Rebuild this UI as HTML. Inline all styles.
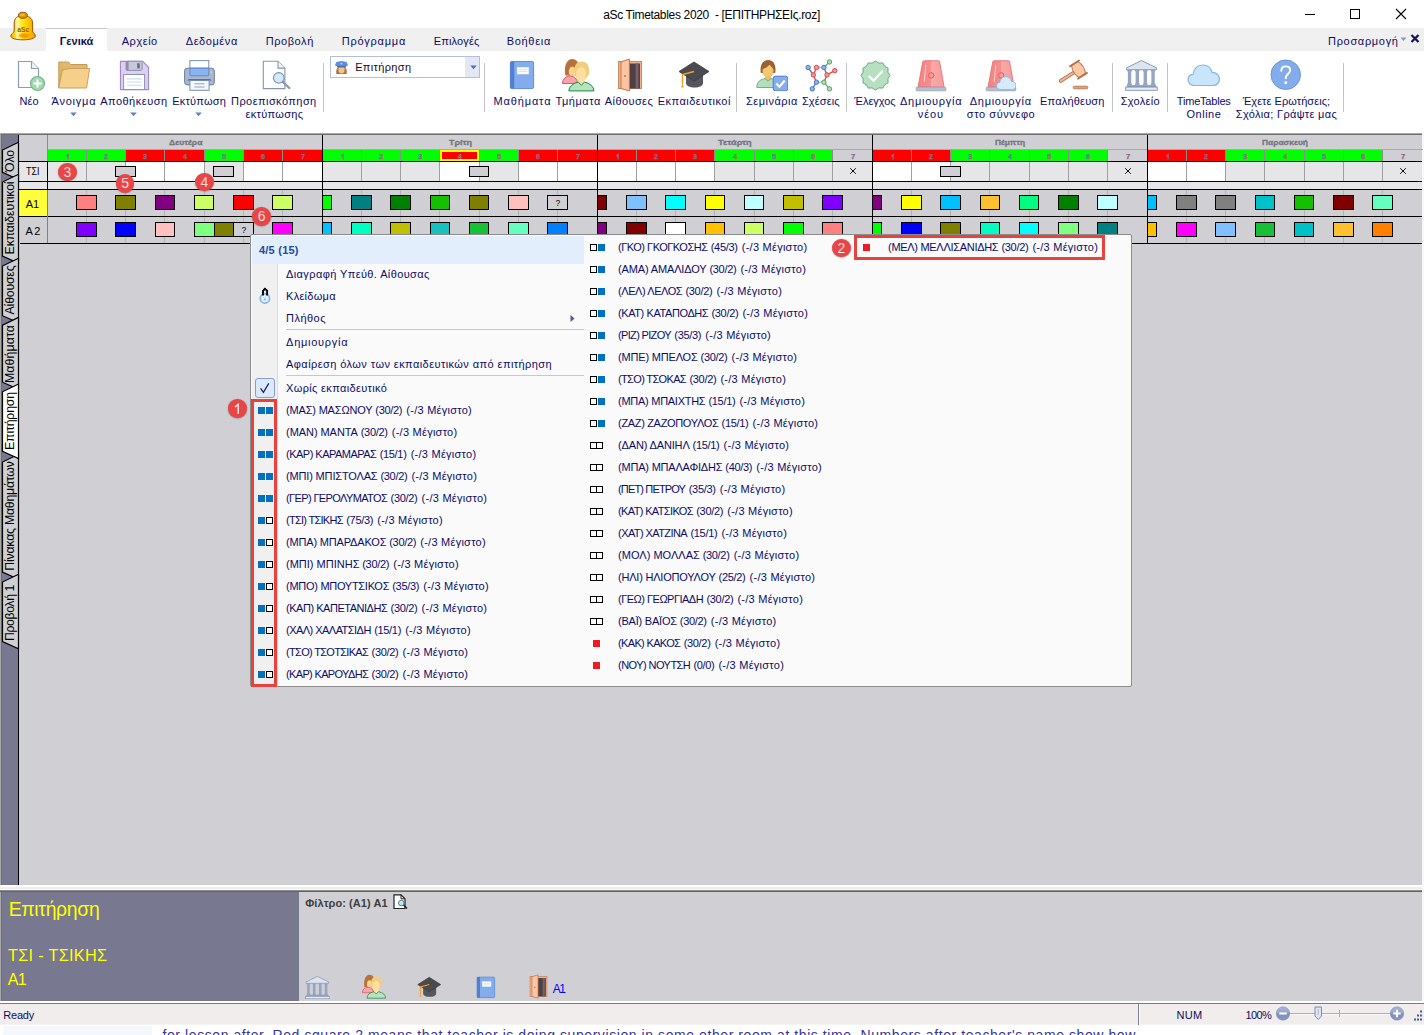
<!DOCTYPE html>
<html><head><meta charset="utf-8"><title>aSc Timetables</title><style>
html,body{margin:0;padding:0;overflow:hidden;}
body{width:1424px;height:1035px;position:relative;overflow:hidden;background:#fff;font-family:"Liberation Sans",sans-serif;}
body div,body span,body svg{position:absolute;}
span{white-space:pre;}
</style></head><body>
<div style="left:0;top:0;width:1424px;height:1035px;overflow:hidden;background:#fff;">
<svg width="0" height="0" style="left:0;top:0">
<defs>
<linearGradient id="gBell2" x1="0" x2="1"><stop offset="0" stop-color="#ffb400"/><stop offset="0.14" stop-color="#ffd000"/><stop offset="0.27" stop-color="#fff6c0"/><stop offset="0.42" stop-color="#ffee20"/><stop offset="0.7" stop-color="#ffcc00"/><stop offset="1" stop-color="#f09800"/></linearGradient><radialGradient id="gBell3" cx="0.5" cy="0.5" r="0.5"><stop offset="0" stop-color="#ff8400"/><stop offset="0.6" stop-color="#ff9600" stop-opacity="0.8"/><stop offset="1" stop-color="#ffb000" stop-opacity="0"/></radialGradient><radialGradient id="gBell" cx="0.38" cy="0.35" r="0.75"><stop offset="0" stop-color="#fff27a"/><stop offset="0.45" stop-color="#ffc81e"/><stop offset="1" stop-color="#f08a00"/></radialGradient>
<linearGradient id="gSir" x1="0" x2="1"><stop offset="0" stop-color="#f48282"/><stop offset="0.5" stop-color="#f68e8e"/><stop offset="0.5" stop-color="#f8a9a9"/><stop offset="1" stop-color="#f69c9c"/></linearGradient>

<symbol id="i-bell" viewBox="0 0 28 30">
<path d="M1.800 25C1.800 23 4.600 22.300 5.200 20L5.200 12C5.200 7 8.500 4.600 13.900 4.600S23.600 7 23.600 12L23.600 20C24.200 22.300 26.300 23 26.300 25C26.300 27.400 21 28.800 14 28.800S1.800 27.400 1.800 25Z" fill="url(#gBell2)" stroke="#9a5410" stroke-width="1"/>
<ellipse cx="15.800" cy="24.600" rx="7.500" ry="3.300" fill="url(#gBell3)"/>
<ellipse cx="13.900" cy="4.300" rx="4.500" ry="3" fill="#dc9800" stroke="#8a4a10" stroke-width="0.900"/>
<ellipse cx="13.400" cy="3.700" rx="2.600" ry="1.300" fill="#f4c030" opacity="0.8"/>
<text x="14.200" y="21.300" font-family="Liberation Sans" font-size="6.800" font-weight="700" fill="#9a5a14" text-anchor="middle">aSc</text>
</symbol>
<symbol id="i-new" viewBox="0 0 32 32">
<path d="M2.500 1.500H15.500L22.500 8.500V27.500H2.500Z" fill="#fff" stroke="#8d9db6" stroke-width="1.2"/>
<path d="M15.500 1.500V8.500H22.500" fill="#f4f6fa" stroke="#8d9db6" stroke-width="1.2"/>
<circle cx="21.5" cy="23.5" r="7" fill="#a5d8b0" stroke="#74b487" stroke-width="1.2"/>
<path d="M21.5 19.500V27.500M17.500 23.5H25.500" stroke="#fff" stroke-width="2"/>
</symbol>
<symbol id="i-folder" viewBox="0 0 32 32">
<path d="M0.800 29V3H10.500L12.500 5.500H29V11H4Z" fill="#e2b76b" stroke="#c39a55" stroke-width="1"/>
<path d="M0.800 29L4 12.500Q4.400 10.800 6.500 10.500L12 9.500H31.600L28.600 29Z" fill="#f6d08a" stroke="#c9a25e" stroke-width="1"/>
</symbol>
<symbol id="i-save" viewBox="0 0 32 32">
<path d="M1.500 1.500H24.500L30.500 7.500V30.500H1.500Z" fill="#dad0f0" stroke="#a48ccc" stroke-width="1.200"/>
<rect x="7.300" y="1.300" width="16.500" height="9.400" rx="1.200" fill="#c6cad8" stroke="#8c90aa" stroke-width="1"/>
<rect x="7.300" y="1.300" width="2.600" height="9.400" fill="#9a86b4"/>
<rect x="18.800" y="3.300" width="2.600" height="5.400" fill="#5e6a88"/>
<rect x="4.800" y="15" width="21.600" height="15.500" fill="#fff" stroke="#8c90aa" stroke-width="1"/>
<path d="M7.800 19.500H23.500M7.800 22.800H23.500M7.800 26.100H23.500" stroke="#bfe0f8" stroke-width="1.100"/>
</symbol>
<symbol id="i-print" viewBox="0 0 32 32">
<rect x="5.900" y="0.600" width="18.900" height="9" fill="#fff" stroke="#7a8cac" stroke-width="1"/>
<rect x="0.600" y="8.200" width="29.700" height="16.700" rx="2.600" fill="#a9b8d0" stroke="#6a7c9e" stroke-width="1"/>
<rect x="5.900" y="8.200" width="18.900" height="7.600" rx="0.800" fill="#8ab4ee" stroke="#5a88d0" stroke-width="1"/>
<rect x="26.300" y="11.400" width="1.600" height="1.600" fill="#ffd94a"/>
<path d="M4 20.800Q4 19.600 5.500 19.600H25.500Q27 19.600 27 20.800" stroke="#5f7090" stroke-width="1.200" fill="none"/>
<rect x="5.900" y="20.500" width="19.200" height="9.800" fill="#f4f7fb" stroke="#7a8cac" stroke-width="1"/>
<path d="M10.500 23.800H20.500M10.500 27H20.500" stroke="#93a3bc" stroke-width="1"/>
</symbol>
<symbol id="i-preview" viewBox="0 0 32 32">
<path d="M1.300 1.200H16L22.900 8.100V28.600H1.300Z" fill="#fff" stroke="#8595ae" stroke-width="1.100"/>
<path d="M16 1.200V8.100H22.900" fill="#f0f3f8" stroke="#8595ae" stroke-width="1.100"/>
<path d="M20.800 21.800L27.300 28" stroke="#8a9ab4" stroke-width="2.400" stroke-linecap="round"/>
<circle cx="16.800" cy="17.900" r="5.300" fill="#d0e9fb" stroke="#7e90aa" stroke-width="1.100"/>
</symbol>
<symbol id="i-police" viewBox="0 0 16 16">
<path d="M2.500 15C2 10 3 7 8 7S14 10 13.500 15Z" fill="#b07040"/>
<ellipse cx="8" cy="10.500" rx="3.300" ry="4" fill="#f3c48c"/>
<path d="M1 5.500L2.500 2L8 1L13.500 2L15 5.500L12.500 7H3.500Z" fill="#5b8fdc"/>
<rect x="3.300" y="6.300" width="9.400" height="1.700" fill="#4a6fae"/>
<circle cx="8" cy="3.800" r="1" fill="#ffd84a"/>
</symbol>
<symbol id="i-book" viewBox="0 0 32 32">
<rect x="4.500" y="1.500" width="24" height="28" rx="1.500" fill="#82acec" stroke="#5c8ad4" stroke-width="1"/>
<rect x="4.500" y="1.500" width="4" height="28" rx="1" fill="#4f7fd0"/>
<rect x="11.500" y="7.500" width="12" height="7" fill="#fff" stroke="#d8e4f8" stroke-width="0.6"/>
<path d="M13 10H22M13 12H22" stroke="#c9d3e6" stroke-width="0.8"/>
</symbol>
<symbol id="i-people" viewBox="0 0 33 34">
<path d="M3.400 17.600C1.800 10 4 0.900 10 0.900C15 0.900 17 5 16.600 9L16 17.800Z" fill="#b8703c"/>
<ellipse cx="10.300" cy="13.800" rx="3.500" ry="5.200" fill="#fbd58a"/>
<path d="M0.400 25.500A7.600 7.600 0 0 1 15.600 25.500Z" fill="#f8a4ac" stroke="#dc4a5c" stroke-width="0.900"/>
<path d="M13 16.500C11.300 8 14 3.400 19.800 3.400C25.200 3.400 28.200 8 26.800 16.500L24 20H15Z" fill="#f2cd7c"/>
<ellipse cx="19" cy="16" rx="5.300" ry="7.300" fill="#fde0a0" stroke="#ecc888" stroke-width="0.600"/>
<path d="M14.200 11.500C17 11 21 8.500 22 6.500C23 9 24.500 11 25.600 13C27 8 24 4.200 19.800 4.200C15.500 4.200 13.500 7.500 14.200 11.500Z" fill="#f2cd7c"/>
<path d="M16.300 21H22.500V26.500L19.400 28L16.300 26.500Z" fill="#fde0a0"/>
<path d="M6.800 32.900A12.600 9.300 0 0 1 16.300 24.100L19.400 27.200L22.500 24.100A12.600 9.300 0 0 1 32 32.900Z" fill="#b8e2c2" stroke="#1e8a3e" stroke-width="1"/>
</symbol>
<symbol id="i-door" viewBox="0 0 32 34">
<rect x="5.500" y="3.500" width="23" height="27" fill="#f4b088" stroke="#c88860" stroke-width="1"/>
<rect x="16" y="5.500" width="11" height="25" fill="#504044"/>
<rect x="22.600" y="5.500" width="3" height="25" fill="#74606a"/>
<path d="M8 3.700L16.400 1.200V33L8 30.500Z" fill="#fcc4a0" stroke="#b87850" stroke-width="1" stroke-linejoin="round"/>
<rect x="11.300" y="17.300" width="1.400" height="1.400" fill="#8a5a3a"/>
</symbol>
<symbol id="i-cap" viewBox="0 0 32 32">
<path d="M8 15V24C8 27 12 28.500 16.500 28.500S25 27 25 24V15Z" fill="#56565c"/>
<path d="M1 12.500L16 3L31 12.500L16 22Z" fill="#4a4a50" stroke="#3a3a40" stroke-width="0.8"/>
<path d="M16 12.500L4.500 15.500V25" fill="none" stroke="#f0a020" stroke-width="1.400"/>
<path d="M4.500 24L3.200 28.500H5.800Z" fill="#f0a020"/>
</symbol>
<symbol id="i-seminar" viewBox="0 0 32 32">
<path d="M4.800 14C3.500 6 7 1 12.200 1S20.500 6 19.200 14Z" fill="#9c6034"/>
<ellipse cx="12" cy="11.800" rx="5.300" ry="6.700" fill="#f5c870" stroke="#d8a450" stroke-width="0.600"/>
<path d="M6.200 10.500C8.500 9.500 12.500 7.500 13.500 5.500C15.500 8 17 9.500 18.200 10.500C19 6 17 2 12.200 2S5.500 6 6.200 10.500Z" fill="#9c6034"/>
<path d="M9 17.500H15V21.500L12 23.500L9 21.500Z" fill="#f0bc64"/>
<path d="M0.800 28.500C0.800 22 5 20.500 9 19.500L12 22.300L15 19.500C19 20.500 23 22 23 28.500Z" fill="#b4dfbe" stroke="#62ac7c" stroke-width="0.900"/>
<rect x="17.200" y="17.200" width="14.600" height="14.600" rx="2.200" fill="#86aeee" stroke="#4a7cd0" stroke-width="1"/>
<path d="M20.300 24.600L23.500 27.700L28.700 21.500" fill="none" stroke="#fff" stroke-width="2.200"/>
</symbol>
<symbol id="i-rel" viewBox="0 0 33 33"><g stroke-width="1.300" fill="none"><path d="M3.1 8.5L8.35 15.9" stroke="#4a78cc"/><path d="M11.5 8.5L8.35 15.9" stroke="#d84a4a"/><path d="M11.5 8.5L18.9 8.5" stroke="#a4c4f2"/><path d="M18.9 8.5L24.5 2.9" stroke="#5aa070"/><path d="M18.9 8.5L22.0 15.9" stroke="#4a78cc"/><path d="M22.0 15.9L29.8 11.65" stroke="#d84a4a"/><path d="M22.0 15.9L18.9 23.2" stroke="#d84a4a"/><path d="M18.9 23.2L11.5 23.2" stroke="#a8d8b4"/><path d="M11.5 23.2L8.35 15.9" stroke="#d84a4a"/><path d="M11.5 23.2L7.3 29.9" stroke="#4a78cc"/><path d="M18.9 23.2L24.5 29.9" stroke="#5aa070"/></g><g stroke-width="1"><circle cx="11.5" cy="8.5" r="2.200" fill="#f49696" stroke="#d84a4a"/><circle cx="18.9" cy="8.5" r="2.200" fill="#8eb2ee" stroke="#4a78cc"/><circle cx="22.0" cy="15.9" r="2.200" fill="#f49696" stroke="#d84a4a"/><circle cx="18.9" cy="23.2" r="2.200" fill="#b0dab8" stroke="#5aa070"/><circle cx="11.5" cy="23.2" r="2.200" fill="#8eb2ee" stroke="#4a78cc"/><circle cx="8.35" cy="15.9" r="2.200" fill="#f49696" stroke="#d84a4a"/><circle cx="3.1" cy="8.5" r="2.200" fill="#8eb2ee" stroke="#4a78cc"/><circle cx="24.5" cy="2.9" r="2.200" fill="#b0dab8" stroke="#5aa070"/><circle cx="29.8" cy="11.65" r="2.200" fill="#f49696" stroke="#d84a4a"/><circle cx="7.3" cy="29.9" r="2.200" fill="#8eb2ee" stroke="#4a78cc"/><circle cx="24.5" cy="29.9" r="2.200" fill="#b0dab8" stroke="#5aa070"/></g></symbol>
<symbol id="i-check" viewBox="0 0 32 32">
<path d="M16 1L19.500 3.200L23.600 3L25.500 6.500L29 8.400L28.800 12.500L31 16L28.800 19.500L29 23.600L25.500 25.500L23.600 29L19.500 28.800L16 31L12.500 28.800L8.400 29L6.500 25.500L3 23.600L3.200 19.500L1 16L3.200 12.500L3 8.400L6.500 6.500L8.400 3L12.500 3.200Z" fill="#b6e0c0" stroke="#62ac7c" stroke-width="1" stroke-linejoin="round"/>
<path d="M9 16.500L14 21.300L23.500 11" fill="none" stroke="#fff" stroke-width="2.200"/>
</symbol>
<symbol id="i-siren" viewBox="0 0 32 32">
<path d="M7.700 2Q7.900 0.700 9.200 0.700H23.200Q24.500 0.700 24.700 2L29.200 27.200H3Z" fill="url(#gSir)" stroke="#e46a6a" stroke-width="0.800"/>
<path d="M10.900 5L9.100 22" stroke="#fcd2d2" stroke-width="1"/>
<circle cx="16.200" cy="15.400" r="2.700" fill="#f79a9a" stroke="#de5858" stroke-width="0.900"/>
<rect x="1.200" y="27.200" width="29.600" height="3.600" rx="0.800" fill="#b4c0d0" stroke="#93a2b8" stroke-width="0.800"/>
</symbol>
<symbol id="i-cloudsm" viewBox="0 0 22 15">
<path d="M5.500 14.500C2.500 14.500 0.500 12.800 0.500 10.500C0.500 8.500 2 7 4 6.800C4.300 3.500 6.800 0.500 10.500 0.500C13.800 0.500 16 2.800 16.500 5.500C19.500 5.500 21.500 7.500 21.500 10C21.500 12.800 19.500 14.500 17 14.500Z" fill="#d5ebfc" stroke="#86b6e6" stroke-width="1"/>
</symbol>
<symbol id="i-gavel" viewBox="0 0 32 32">
<g transform="translate(20.5 11.55) rotate(57.4)">
<rect x="-1.400" y="5" width="2.800" height="17.500" rx="1.400" fill="#f3b890" stroke="#b5704a" stroke-width="0.900"/>
<path d="M-7 -3.800Q0 -7.200 7 -3.800L7 3.800Q0 7.200 -7 3.800Z" fill="#fdc8a2" stroke="#b5704a" stroke-width="0.900"/>
<path d="M-7.400 -5.400V5.400M7.400 -5.400V5.400" stroke="#b5704a" stroke-width="1.800" stroke-linecap="round"/>
</g>
<rect x="15.300" y="28.200" width="14.500" height="2.600" rx="1" fill="#e0a078" stroke="#b5704a" stroke-width="0.800"/>
</symbol>
<symbol id="i-school" viewBox="0 0 33 31">
<path d="M16.500 0.500L31.600 7.900V9.700H1.400V7.900Z" fill="#dce4f0" stroke="#7f92b0" stroke-width="0.900" stroke-linejoin="round"/>
<g fill="#96a6c2"><rect x="2.85" y="9.700" width="3.400" height="15.400"/><rect x="2.1500000000000004" y="9.700" width="4.800" height="1.600"/><rect x="2.1500000000000004" y="23.500" width="4.800" height="1.600"/><rect x="10.6" y="9.700" width="3.400" height="15.400"/><rect x="9.9" y="9.700" width="4.800" height="1.600"/><rect x="9.9" y="23.500" width="4.800" height="1.600"/><rect x="18.6" y="9.700" width="3.400" height="15.400"/><rect x="17.900000000000002" y="9.700" width="4.800" height="1.600"/><rect x="17.900000000000002" y="23.500" width="4.800" height="1.600"/><rect x="26.35" y="9.700" width="3.400" height="15.400"/><rect x="25.650000000000002" y="9.700" width="4.800" height="1.600"/><rect x="25.650000000000002" y="23.500" width="4.800" height="1.600"/></g>
<rect x="1.700" y="25.100" width="29.600" height="2" fill="#8fa0bc"/>
<rect x="0.700" y="27.100" width="31.600" height="3.200" fill="#e6ecf6" stroke="#7f92b0" stroke-width="0.900"/>
</symbol>
<symbol id="i-cloud" viewBox="0 0 34 23">
<path d="M8.500 22C4 22 1 19.500 1 16C1 13 3.200 10.800 6.200 10.500C6.800 5 10.500 1 16 1C21 1 24.500 4.200 25.500 8.500C30 8.500 33 11.500 33 15.200C33 19.200 30 22 26 22Z" fill="#c9e5fb" stroke="#86b6e6" stroke-width="1.200"/>
</symbol>
<symbol id="i-help" viewBox="0 0 32 32">
<circle cx="16" cy="16" r="15" fill="#82acec" stroke="#6a96dc" stroke-width="1"/>
<path d="M11.500 12C11.500 9 13.500 7.500 16 7.500S20.500 9 20.500 11.500C20.500 15 16 15 16 19.500" fill="none" stroke="#fff" stroke-width="2" stroke-linecap="round"/>
<circle cx="16" cy="24" r="1.400" fill="#fff"/>
</symbol>
</defs>
</svg>

<div style="left:0px;top:28px;width:1424px;height:23px;background:#f0f0f0;"></div>
<div style="left:46px;top:28px;width:61px;height:23px;background:#fff;border-top:1px solid #c8c8c8;box-sizing:border-box;"></div>
<div style="left:0px;top:133px;width:1424px;height:1px;background:#a8a8a8;"></div>
<div style="left:0px;top:134px;width:1424px;height:1px;background:#6e6e6e;"></div>
<div style="left:0px;top:134px;width:1px;height:757px;background:#a8a8a8;"></div>
<div style="left:1px;top:135px;width:1px;height:756px;background:#6e6e6e;"></div>
<div style="left:2px;top:135px;width:1420px;height:750px;background:#d0cfd4;"></div>
<div style="left:1422px;top:133px;width:2px;height:752px;background:#f8f8f8;"></div>
<div style="left:2px;top:135px;width:16px;height:750px;background:#787891;"></div>
<div style="left:18px;top:135px;width:1px;height:750px;background:#000;"></div>
<span style="left:603.15px;top:6.96px;font-size:12px;line-height:16px;color:#000;font-weight:400;letter-spacing:-0.330px;">aSc Timetables 2020  - [ΕΠΙΤΗΡΗΣΕΙς.roz]</span>
<svg style="left:1300px;top:4px" width="120" height="22" viewBox="0 0 120 22"><path d="M5 10.500H15" stroke="#000" stroke-width="1"/><rect x="50.500" y="5.500" width="9" height="9" fill="none" stroke="#000" stroke-width="1"/><path d="M96 5L106 15M106 5L96 15" stroke="#000" stroke-width="1.100"/></svg>
<svg style="left:9px;top:11px" width="28" height="30"><use href="#i-bell" width="28" height="30"/></svg>
<span style="left:59.75px;top:34.15px;font-size:11px;line-height:14px;color:#10104a;font-weight:700;letter-spacing:-0.009px;">Γενικά</span>
<span style="left:121.75px;top:34.15px;font-size:11px;line-height:14px;color:#0c0c66;font-weight:400;letter-spacing:0.531px;">Αρχείο</span>
<span style="left:185.75px;top:34.15px;font-size:11px;line-height:14px;color:#0c0c66;font-weight:400;letter-spacing:0.558px;">Δεδομένα</span>
<span style="left:265.75px;top:34.15px;font-size:11px;line-height:14px;color:#0c0c66;font-weight:400;letter-spacing:0.555px;">Προβολή</span>
<span style="left:341.75px;top:34.15px;font-size:11px;line-height:14px;color:#0c0c66;font-weight:400;letter-spacing:0.752px;">Πρόγραμμα</span>
<span style="left:433.75px;top:34.15px;font-size:11px;line-height:14px;color:#0c0c66;font-weight:400;letter-spacing:0.138px;">Επιλογές</span>
<span style="left:506.75px;top:34.15px;font-size:11px;line-height:14px;color:#0c0c66;font-weight:400;letter-spacing:0.682px;">Βοήθεια</span>
<span style="left:1328.05px;top:33.75px;font-size:11px;line-height:14px;color:#0c0c66;font-weight:400;letter-spacing:0.676px;">Προσαρμογή</span>
<svg style="left:1400px;top:36.7px" width="7" height="5" viewBox="0 0 7 5"><path d="M0.500 0.500H6.500L3.500 4Z" fill="#7f9ad0"/></svg>
<svg style="left:1410px;top:34px" width="10" height="9" viewBox="0 0 10 9"><path d="M1.500 1L8.500 8M8.500 1L1.500 8" stroke="#15155c" stroke-width="2.300"/></svg>
<svg style="left:16px;top:60px" width="32" height="32"><use href="#i-new" width="32" height="32"/></svg>
<span style="left:19.45px;top:94.05px;font-size:11px;line-height:14px;color:#0c0c66;font-weight:400;letter-spacing:0.116px;">Νέο</span>
<svg style="left:58px;top:59px" width="32" height="32"><use href="#i-folder" width="32" height="32"/></svg>
<span style="left:51.55px;top:94.05px;font-size:11px;line-height:14px;color:#0c0c66;font-weight:400;letter-spacing:0.766px;">Άνοιγμα</span>
<svg style="left:118.5px;top:59.5px" width="31" height="31"><use href="#i-save" width="31" height="31"/></svg>
<span style="left:100.15px;top:94.05px;font-size:11px;line-height:14px;color:#0c0c66;font-weight:400;letter-spacing:0.494px;">Αποθήκευση</span>
<svg style="left:183.6px;top:59.6px" width="32" height="32"><use href="#i-print" width="32" height="32"/></svg>
<span style="left:172.15px;top:94.05px;font-size:11px;line-height:14px;color:#0c0c66;font-weight:400;letter-spacing:0.237px;">Εκτύπωση</span>
<svg style="left:262px;top:60px" width="32" height="32"><use href="#i-preview" width="32" height="32"/></svg>
<span style="left:231.05px;top:94.05px;font-size:11px;line-height:14px;color:#0c0c66;font-weight:400;letter-spacing:0.433px;">Προεπισκόπηση</span>
<span style="left:245.45px;top:106.95px;font-size:11px;line-height:14px;color:#0c0c66;font-weight:400;letter-spacing:0.325px;">εκτύπωσης</span>
<svg style="left:69.8px;top:111.5px" width="7" height="5" viewBox="0 0 7 5"><path d="M0.300 0.500H6.700L3.500 4.300Z" fill="#5f7fc0"/></svg>
<svg style="left:129.7px;top:111.5px" width="7" height="5" viewBox="0 0 7 5"><path d="M0.300 0.500H6.700L3.500 4.300Z" fill="#5f7fc0"/></svg>
<svg style="left:194.9px;top:111.5px" width="7" height="5" viewBox="0 0 7 5"><path d="M0.300 0.500H6.700L3.500 4.300Z" fill="#5f7fc0"/></svg>
<div style="left:323px;top:63px;width:1px;height:49px;background:#c4c4c4;"></div>
<div style="left:484px;top:63px;width:1px;height:49px;background:#c4c4c4;"></div>
<div style="left:736px;top:63px;width:1px;height:49px;background:#c4c4c4;"></div>
<div style="left:846px;top:63px;width:1px;height:49px;background:#c4c4c4;"></div>
<div style="left:1112px;top:63px;width:1px;height:49px;background:#c4c4c4;"></div>
<div style="left:1167px;top:63px;width:1px;height:49px;background:#c4c4c4;"></div>
<div style="left:1343px;top:63px;width:1px;height:49px;background:#c4c4c4;"></div>
<div style="left:330px;top:56px;width:150px;height:22px;background:#fff;border:1px solid #b4bfd4;box-sizing:border-box;"></div>
<div style="left:465px;top:57px;width:14px;height:20px;background:#e2e7f3;"></div>
<svg style="left:469.500px;top:64.500px" width="7" height="5" viewBox="0 0 7 5"><path d="M0.300 0.500H6.700L3.500 4.300Z" fill="#4f6fb8"/></svg>
<svg style="left:333.5px;top:59.5px" width="15" height="15"><use href="#i-police" width="15" height="15"/></svg>
<span style="left:355.15px;top:60.15px;font-size:11px;line-height:14px;color:#1a0a1a;font-weight:400;letter-spacing:0.347px;">Επιτήρηση</span>
<svg style="left:505.5px;top:60px" width="31" height="31"><use href="#i-book" width="31" height="31"/></svg>
<span style="left:493.45px;top:94.05px;font-size:11px;line-height:14px;color:#0c0c66;font-weight:400;letter-spacing:0.869px;">Μαθήματα</span>
<svg style="left:562px;top:58px" width="33" height="34"><use href="#i-people" width="33" height="34"/></svg>
<span style="left:555.55px;top:94.05px;font-size:11px;line-height:14px;color:#0c0c66;font-weight:400;letter-spacing:0.529px;">Τμήματα</span>
<svg style="left:613px;top:58px" width="32" height="34"><use href="#i-door" width="32" height="34"/></svg>
<span style="left:604.75px;top:94.05px;font-size:11px;line-height:14px;color:#0c0c66;font-weight:400;letter-spacing:0.424px;">Αίθουσες</span>
<svg style="left:678px;top:58.5px" width="32" height="32"><use href="#i-cap" width="32" height="32"/></svg>
<span style="left:657.75px;top:94.05px;font-size:11px;line-height:14px;color:#0c0c66;font-weight:400;letter-spacing:0.480px;">Εκπαιδευτικοί</span>
<svg style="left:756px;top:59px" width="32" height="32"><use href="#i-seminar" width="32" height="32"/></svg>
<span style="left:746.05px;top:94.05px;font-size:11px;line-height:14px;color:#0c0c66;font-weight:400;letter-spacing:0.474px;">Σεμινάρια</span>
<svg style="left:804.5px;top:58.5px" width="33" height="33"><use href="#i-rel" width="33" height="33"/></svg>
<span style="left:801.95px;top:94.05px;font-size:11px;line-height:14px;color:#0c0c66;font-weight:400;letter-spacing:0.130px;">Σχέσεις</span>
<svg style="left:860px;top:59.5px" width="31" height="31"><use href="#i-check" width="31" height="31"/></svg>
<span style="left:854.35px;top:94.05px;font-size:11px;line-height:14px;color:#0c0c66;font-weight:400;letter-spacing:-0.040px;">Έλεγχος</span>
<svg style="left:915px;top:59.5px" width="32" height="32"><use href="#i-siren" width="32" height="32"/></svg>
<span style="left:899.95px;top:94.05px;font-size:11px;line-height:14px;color:#0c0c66;font-weight:400;letter-spacing:0.750px;">Δημιουργία</span>
<span style="left:917.75px;top:107.35px;font-size:11px;line-height:14px;color:#0c0c66;font-weight:400;letter-spacing:0.918px;">νέου</span>
<svg style="left:984.9px;top:59.5px" width="32" height="32"><use href="#i-siren" width="32" height="32"/></svg>
<svg style="left:995.8px;top:75.8px" width="20.5" height="14.2"><use href="#i-cloudsm" width="20.5" height="14.2"/></svg>
<span style="left:969.75px;top:94.05px;font-size:11px;line-height:14px;color:#0c0c66;font-weight:400;letter-spacing:0.705px;">Δημιουργία</span>
<span style="left:966.75px;top:107.35px;font-size:11px;line-height:14px;color:#0c0c66;font-weight:400;letter-spacing:0.588px;">στο σύννεφο</span>
<svg style="left:1058px;top:58px" width="32" height="32"><use href="#i-gavel" width="32" height="32"/></svg>
<span style="left:1040.05px;top:94.05px;font-size:11px;line-height:14px;color:#0c0c66;font-weight:400;letter-spacing:0.189px;">Επαλήθευση</span>
<svg style="left:1124.5px;top:59.5px" width="33" height="31"><use href="#i-school" width="33" height="31"/></svg>
<span style="left:1120.75px;top:94.05px;font-size:11px;line-height:14px;color:#0c0c66;font-weight:400;letter-spacing:0.291px;">Σχολείο</span>
<svg style="left:1187.3px;top:63.7px" width="33.4" height="22.6"><use href="#i-cloud" width="33.4" height="22.6"/></svg>
<span style="left:1176.85px;top:94.05px;font-size:11px;line-height:14px;color:#0c0c66;font-weight:400;letter-spacing:-0.205px;">TimeTables</span>
<span style="left:1186.55px;top:107.35px;font-size:11px;line-height:14px;color:#0c0c66;font-weight:400;letter-spacing:0.501px;">Online</span>
<svg style="left:1270.2px;top:59px" width="31.5" height="31.5"><use href="#i-help" width="31.5" height="31.5"/></svg>
<span style="left:1242.65px;top:94.05px;font-size:11px;line-height:14px;color:#0c0c66;font-weight:400;letter-spacing:0.054px;">Έχετε Ερωτήσεις;</span>
<span style="left:1235.85px;top:107.35px;font-size:11px;line-height:14px;color:#0c0c66;font-weight:400;letter-spacing:0.321px;">Σχόλια; Γράψτε μας</span>
<div style="left:19px;top:135px;width:28px;height:26px;background:#d0cfd4;"></div>
<div style="left:47px;top:135px;width:1px;height:26px;background:#8c8c8c;"></div>
<span style="left:168.60px;top:136.98px;font-size:15.2px;line-height:20px;color:#76767e;font-weight:700;transform-origin:0 0;transform:scale(0.5630,0.5000);-webkit-text-stroke:0.6px #76767e;">Δευτέρα</span>
<div style="left:48px;top:150px;width:38px;height:11px;background:#00ff00;"></div>
<div style="left:47px;top:150px;width:1px;height:11px;background:#8c8c8c;"></div>
<svg style="left:63.50px;top:152.60px" width="8" height="8" viewBox="-4 -4 8 8"><path d="M-1.700 -0.900L0.100 -2.300V2.500" fill="none" stroke="#886c8c" stroke-width="1.350"/></svg>
<div style="left:48px;top:162px;width:38px;height:19px;background:#e6e6e8;"></div>
<div style="left:47px;top:162px;width:1px;height:19px;background:#a0a0a0;"></div>
<div style="left:87px;top:150px;width:38px;height:11px;background:#00ff00;"></div>
<div style="left:86px;top:150px;width:1px;height:11px;background:#8c8c8c;"></div>
<span style="left:104.41px;top:150.68px;font-size:15.0px;line-height:20px;color:#886c8c;font-weight:700;transform-origin:0 0;transform:scale(0.5000,0.5000);-webkit-text-stroke:0.5px #886c8c;">2</span>
<div style="left:87px;top:162px;width:38px;height:19px;background:#e6e6e8;"></div>
<div style="left:86px;top:162px;width:1px;height:19px;background:#a0a0a0;"></div>
<div style="left:126px;top:150px;width:38px;height:11px;background:#ff0000;"></div>
<div style="left:125px;top:150px;width:1px;height:11px;background:#8c8c8c;"></div>
<span style="left:143.41px;top:150.68px;font-size:15.0px;line-height:20px;color:#886c8c;font-weight:700;transform-origin:0 0;transform:scale(0.5000,0.5000);-webkit-text-stroke:0.5px #886c8c;">3</span>
<div style="left:126px;top:162px;width:38px;height:19px;background:#fff;"></div>
<div style="left:125px;top:162px;width:1px;height:19px;background:#a0a0a0;"></div>
<div style="left:165px;top:150px;width:39px;height:11px;background:#ff0000;"></div>
<div style="left:164px;top:150px;width:1px;height:11px;background:#8c8c8c;"></div>
<span style="left:182.91px;top:150.68px;font-size:15.0px;line-height:20px;color:#886c8c;font-weight:700;transform-origin:0 0;transform:scale(0.5000,0.5000);-webkit-text-stroke:0.5px #886c8c;">4</span>
<div style="left:165px;top:162px;width:39px;height:19px;background:#fff;"></div>
<div style="left:164px;top:162px;width:1px;height:19px;background:#a0a0a0;"></div>
<div style="left:205px;top:150px;width:38px;height:11px;background:#00ff00;"></div>
<div style="left:204px;top:150px;width:1px;height:11px;background:#8c8c8c;"></div>
<span style="left:222.41px;top:150.68px;font-size:15.0px;line-height:20px;color:#886c8c;font-weight:700;transform-origin:0 0;transform:scale(0.5000,0.5000);-webkit-text-stroke:0.5px #886c8c;">5</span>
<div style="left:205px;top:162px;width:38px;height:19px;background:#e6e6e8;"></div>
<div style="left:204px;top:162px;width:1px;height:19px;background:#a0a0a0;"></div>
<div style="left:244px;top:150px;width:38px;height:11px;background:#ff0000;"></div>
<div style="left:243px;top:150px;width:1px;height:11px;background:#8c8c8c;"></div>
<span style="left:261.41px;top:150.68px;font-size:15.0px;line-height:20px;color:#886c8c;font-weight:700;transform-origin:0 0;transform:scale(0.5000,0.5000);-webkit-text-stroke:0.5px #886c8c;">6</span>
<div style="left:244px;top:162px;width:38px;height:19px;background:#fff;"></div>
<div style="left:243px;top:162px;width:1px;height:19px;background:#a0a0a0;"></div>
<div style="left:283px;top:150px;width:39px;height:11px;background:#ff0000;"></div>
<div style="left:282px;top:150px;width:1px;height:11px;background:#8c8c8c;"></div>
<span style="left:300.91px;top:150.68px;font-size:15.0px;line-height:20px;color:#886c8c;font-weight:700;transform-origin:0 0;transform:scale(0.5000,0.5000);-webkit-text-stroke:0.5px #886c8c;">7</span>
<div style="left:283px;top:162px;width:39px;height:19px;background:#fff;"></div>
<div style="left:282px;top:162px;width:1px;height:19px;background:#a0a0a0;"></div>
<div style="left:48px;top:149px;width:275px;height:1px;background:#b0a4b4;"></div>
<span style="left:449.10px;top:136.98px;font-size:15.2px;line-height:20px;color:#76767e;font-weight:700;transform-origin:0 0;transform:scale(0.5905,0.5000);-webkit-text-stroke:0.6px #76767e;">Τρίτη</span>
<div style="left:323px;top:150px;width:38px;height:11px;background:#00ff00;"></div>
<div style="left:322px;top:150px;width:1px;height:11px;background:#000;"></div>
<svg style="left:338.50px;top:152.60px" width="8" height="8" viewBox="-4 -4 8 8"><path d="M-1.700 -0.900L0.100 -2.300V2.500" fill="none" stroke="#886c8c" stroke-width="1.350"/></svg>
<div style="left:323px;top:162px;width:38px;height:19px;background:#e6e6e8;"></div>
<div style="left:322px;top:162px;width:1px;height:19px;background:#a0a0a0;"></div>
<div style="left:362px;top:150px;width:38px;height:11px;background:#00ff00;"></div>
<div style="left:361px;top:150px;width:1px;height:11px;background:#8c8c8c;"></div>
<span style="left:379.41px;top:150.68px;font-size:15.0px;line-height:20px;color:#886c8c;font-weight:700;transform-origin:0 0;transform:scale(0.5000,0.5000);-webkit-text-stroke:0.5px #886c8c;">2</span>
<div style="left:362px;top:162px;width:38px;height:19px;background:#e6e6e8;"></div>
<div style="left:361px;top:162px;width:1px;height:19px;background:#a0a0a0;"></div>
<div style="left:401px;top:150px;width:38px;height:11px;background:#00ff00;"></div>
<div style="left:400px;top:150px;width:1px;height:11px;background:#8c8c8c;"></div>
<span style="left:418.41px;top:150.68px;font-size:15.0px;line-height:20px;color:#886c8c;font-weight:700;transform-origin:0 0;transform:scale(0.5000,0.5000);-webkit-text-stroke:0.5px #886c8c;">3</span>
<div style="left:401px;top:162px;width:38px;height:19px;background:#e6e6e8;"></div>
<div style="left:400px;top:162px;width:1px;height:19px;background:#a0a0a0;"></div>
<div style="left:440px;top:150px;width:39px;height:11px;background:#ff0000;"></div>
<div style="left:439px;top:150px;width:1px;height:11px;background:#8c8c8c;"></div>
<span style="left:457.91px;top:150.68px;font-size:15.0px;line-height:20px;color:#886c8c;font-weight:700;transform-origin:0 0;transform:scale(0.5000,0.5000);-webkit-text-stroke:0.5px #886c8c;">4</span>
<div style="left:440px;top:162px;width:39px;height:19px;background:#fff;"></div>
<div style="left:439px;top:162px;width:1px;height:19px;background:#a0a0a0;"></div>
<div style="left:480px;top:150px;width:38px;height:11px;background:#00ff00;"></div>
<div style="left:479px;top:150px;width:1px;height:11px;background:#8c8c8c;"></div>
<span style="left:497.41px;top:150.68px;font-size:15.0px;line-height:20px;color:#886c8c;font-weight:700;transform-origin:0 0;transform:scale(0.5000,0.5000);-webkit-text-stroke:0.5px #886c8c;">5</span>
<div style="left:480px;top:162px;width:38px;height:19px;background:#e6e6e8;"></div>
<div style="left:479px;top:162px;width:1px;height:19px;background:#a0a0a0;"></div>
<div style="left:519px;top:150px;width:38px;height:11px;background:#ff0000;"></div>
<div style="left:518px;top:150px;width:1px;height:11px;background:#8c8c8c;"></div>
<span style="left:536.41px;top:150.68px;font-size:15.0px;line-height:20px;color:#886c8c;font-weight:700;transform-origin:0 0;transform:scale(0.5000,0.5000);-webkit-text-stroke:0.5px #886c8c;">6</span>
<div style="left:519px;top:162px;width:38px;height:19px;background:#fff;"></div>
<div style="left:518px;top:162px;width:1px;height:19px;background:#a0a0a0;"></div>
<div style="left:558px;top:150px;width:39px;height:11px;background:#ff0000;"></div>
<div style="left:557px;top:150px;width:1px;height:11px;background:#8c8c8c;"></div>
<span style="left:575.91px;top:150.68px;font-size:15.0px;line-height:20px;color:#886c8c;font-weight:700;transform-origin:0 0;transform:scale(0.5000,0.5000);-webkit-text-stroke:0.5px #886c8c;">7</span>
<div style="left:558px;top:162px;width:39px;height:19px;background:#fff;"></div>
<div style="left:557px;top:162px;width:1px;height:19px;background:#a0a0a0;"></div>
<div style="left:323px;top:149px;width:275px;height:1px;background:#b0a4b4;"></div>
<span style="left:718.30px;top:136.98px;font-size:15.2px;line-height:20px;color:#76767e;font-weight:700;transform-origin:0 0;transform:scale(0.6009,0.5000);-webkit-text-stroke:0.6px #76767e;">Τετάρτη</span>
<div style="left:598px;top:150px;width:38px;height:11px;background:#ff0000;"></div>
<div style="left:597px;top:150px;width:1px;height:11px;background:#000;"></div>
<svg style="left:613.50px;top:152.60px" width="8" height="8" viewBox="-4 -4 8 8"><path d="M-1.700 -0.900L0.100 -2.300V2.500" fill="none" stroke="#886c8c" stroke-width="1.350"/></svg>
<div style="left:598px;top:162px;width:38px;height:19px;background:#fff;"></div>
<div style="left:597px;top:162px;width:1px;height:19px;background:#a0a0a0;"></div>
<div style="left:637px;top:150px;width:38px;height:11px;background:#ff0000;"></div>
<div style="left:636px;top:150px;width:1px;height:11px;background:#8c8c8c;"></div>
<span style="left:654.41px;top:150.68px;font-size:15.0px;line-height:20px;color:#886c8c;font-weight:700;transform-origin:0 0;transform:scale(0.5000,0.5000);-webkit-text-stroke:0.5px #886c8c;">2</span>
<div style="left:637px;top:162px;width:38px;height:19px;background:#fff;"></div>
<div style="left:636px;top:162px;width:1px;height:19px;background:#a0a0a0;"></div>
<div style="left:676px;top:150px;width:38px;height:11px;background:#ff0000;"></div>
<div style="left:675px;top:150px;width:1px;height:11px;background:#8c8c8c;"></div>
<span style="left:693.41px;top:150.68px;font-size:15.0px;line-height:20px;color:#886c8c;font-weight:700;transform-origin:0 0;transform:scale(0.5000,0.5000);-webkit-text-stroke:0.5px #886c8c;">3</span>
<div style="left:676px;top:162px;width:38px;height:19px;background:#fff;"></div>
<div style="left:675px;top:162px;width:1px;height:19px;background:#a0a0a0;"></div>
<div style="left:715px;top:150px;width:39px;height:11px;background:#00ff00;"></div>
<div style="left:714px;top:150px;width:1px;height:11px;background:#8c8c8c;"></div>
<span style="left:732.91px;top:150.68px;font-size:15.0px;line-height:20px;color:#886c8c;font-weight:700;transform-origin:0 0;transform:scale(0.5000,0.5000);-webkit-text-stroke:0.5px #886c8c;">4</span>
<div style="left:715px;top:162px;width:39px;height:19px;background:#e6e6e8;"></div>
<div style="left:714px;top:162px;width:1px;height:19px;background:#a0a0a0;"></div>
<div style="left:755px;top:150px;width:38px;height:11px;background:#00ff00;"></div>
<div style="left:754px;top:150px;width:1px;height:11px;background:#8c8c8c;"></div>
<span style="left:772.41px;top:150.68px;font-size:15.0px;line-height:20px;color:#886c8c;font-weight:700;transform-origin:0 0;transform:scale(0.5000,0.5000);-webkit-text-stroke:0.5px #886c8c;">5</span>
<div style="left:755px;top:162px;width:38px;height:19px;background:#e6e6e8;"></div>
<div style="left:754px;top:162px;width:1px;height:19px;background:#a0a0a0;"></div>
<div style="left:794px;top:150px;width:38px;height:11px;background:#00ff00;"></div>
<div style="left:793px;top:150px;width:1px;height:11px;background:#8c8c8c;"></div>
<span style="left:811.41px;top:150.68px;font-size:15.0px;line-height:20px;color:#886c8c;font-weight:700;transform-origin:0 0;transform:scale(0.5000,0.5000);-webkit-text-stroke:0.5px #886c8c;">6</span>
<div style="left:794px;top:162px;width:38px;height:19px;background:#e6e6e8;"></div>
<div style="left:793px;top:162px;width:1px;height:19px;background:#a0a0a0;"></div>
<div style="left:833px;top:150px;width:39px;height:11px;background:#d0cfd4;"></div>
<div style="left:832px;top:150px;width:1px;height:11px;background:#8c8c8c;"></div>
<span style="left:850.91px;top:150.68px;font-size:15.0px;line-height:20px;color:#886c8c;font-weight:700;transform-origin:0 0;transform:scale(0.5000,0.5000);-webkit-text-stroke:0.5px #886c8c;">7</span>
<div style="left:833px;top:162px;width:39px;height:19px;background:#e6e6e8;"></div>
<div style="left:832px;top:162px;width:1px;height:19px;background:#a0a0a0;"></div>
<svg style="left:848.5px;top:166.8px" width="8" height="8" viewBox="0 0 8 8"><path d="M1.200 1.200L6.800 6.800M6.800 1.200L1.200 6.800" stroke="#111" stroke-width="1" fill="none"/></svg>
<div style="left:598px;top:149px;width:275px;height:1px;background:#b0a4b4;"></div>
<span style="left:995.00px;top:136.98px;font-size:15.2px;line-height:20px;color:#76767e;font-weight:700;transform-origin:0 0;transform:scale(0.5475,0.5000);-webkit-text-stroke:0.6px #76767e;">Πέμπτη</span>
<div style="left:873px;top:150px;width:38px;height:11px;background:#ff0000;"></div>
<div style="left:872px;top:150px;width:1px;height:11px;background:#000;"></div>
<svg style="left:888.50px;top:152.60px" width="8" height="8" viewBox="-4 -4 8 8"><path d="M-1.700 -0.900L0.100 -2.300V2.500" fill="none" stroke="#886c8c" stroke-width="1.350"/></svg>
<div style="left:873px;top:162px;width:38px;height:19px;background:#fff;"></div>
<div style="left:872px;top:162px;width:1px;height:19px;background:#a0a0a0;"></div>
<div style="left:912px;top:150px;width:38px;height:11px;background:#ff0000;"></div>
<div style="left:911px;top:150px;width:1px;height:11px;background:#8c8c8c;"></div>
<span style="left:929.41px;top:150.68px;font-size:15.0px;line-height:20px;color:#886c8c;font-weight:700;transform-origin:0 0;transform:scale(0.5000,0.5000);-webkit-text-stroke:0.5px #886c8c;">2</span>
<div style="left:912px;top:162px;width:38px;height:19px;background:#fff;"></div>
<div style="left:911px;top:162px;width:1px;height:19px;background:#a0a0a0;"></div>
<div style="left:951px;top:150px;width:38px;height:11px;background:#00ff00;"></div>
<div style="left:950px;top:150px;width:1px;height:11px;background:#8c8c8c;"></div>
<span style="left:968.41px;top:150.68px;font-size:15.0px;line-height:20px;color:#886c8c;font-weight:700;transform-origin:0 0;transform:scale(0.5000,0.5000);-webkit-text-stroke:0.5px #886c8c;">3</span>
<div style="left:951px;top:162px;width:38px;height:19px;background:#e6e6e8;"></div>
<div style="left:950px;top:162px;width:1px;height:19px;background:#a0a0a0;"></div>
<div style="left:990px;top:150px;width:39px;height:11px;background:#00ff00;"></div>
<div style="left:989px;top:150px;width:1px;height:11px;background:#8c8c8c;"></div>
<span style="left:1007.91px;top:150.68px;font-size:15.0px;line-height:20px;color:#886c8c;font-weight:700;transform-origin:0 0;transform:scale(0.5000,0.5000);-webkit-text-stroke:0.5px #886c8c;">4</span>
<div style="left:990px;top:162px;width:39px;height:19px;background:#e6e6e8;"></div>
<div style="left:989px;top:162px;width:1px;height:19px;background:#a0a0a0;"></div>
<div style="left:1030px;top:150px;width:38px;height:11px;background:#00ff00;"></div>
<div style="left:1029px;top:150px;width:1px;height:11px;background:#8c8c8c;"></div>
<span style="left:1047.41px;top:150.68px;font-size:15.0px;line-height:20px;color:#886c8c;font-weight:700;transform-origin:0 0;transform:scale(0.5000,0.5000);-webkit-text-stroke:0.5px #886c8c;">5</span>
<div style="left:1030px;top:162px;width:38px;height:19px;background:#e6e6e8;"></div>
<div style="left:1029px;top:162px;width:1px;height:19px;background:#a0a0a0;"></div>
<div style="left:1069px;top:150px;width:38px;height:11px;background:#00ff00;"></div>
<div style="left:1068px;top:150px;width:1px;height:11px;background:#8c8c8c;"></div>
<span style="left:1086.41px;top:150.68px;font-size:15.0px;line-height:20px;color:#886c8c;font-weight:700;transform-origin:0 0;transform:scale(0.5000,0.5000);-webkit-text-stroke:0.5px #886c8c;">6</span>
<div style="left:1069px;top:162px;width:38px;height:19px;background:#e6e6e8;"></div>
<div style="left:1068px;top:162px;width:1px;height:19px;background:#a0a0a0;"></div>
<div style="left:1108px;top:150px;width:39px;height:11px;background:#d0cfd4;"></div>
<div style="left:1107px;top:150px;width:1px;height:11px;background:#8c8c8c;"></div>
<span style="left:1125.91px;top:150.68px;font-size:15.0px;line-height:20px;color:#886c8c;font-weight:700;transform-origin:0 0;transform:scale(0.5000,0.5000);-webkit-text-stroke:0.5px #886c8c;">7</span>
<div style="left:1108px;top:162px;width:39px;height:19px;background:#e6e6e8;"></div>
<div style="left:1107px;top:162px;width:1px;height:19px;background:#a0a0a0;"></div>
<svg style="left:1123.5px;top:166.8px" width="8" height="8" viewBox="0 0 8 8"><path d="M1.200 1.200L6.800 6.800M6.800 1.200L1.200 6.800" stroke="#111" stroke-width="1" fill="none"/></svg>
<div style="left:873px;top:149px;width:275px;height:1px;background:#b0a4b4;"></div>
<span style="left:1262.20px;top:136.98px;font-size:15.2px;line-height:20px;color:#76767e;font-weight:700;transform-origin:0 0;transform:scale(0.5527,0.5000);-webkit-text-stroke:0.6px #76767e;">Παρασκευή</span>
<div style="left:1148px;top:150px;width:38px;height:11px;background:#ff0000;"></div>
<div style="left:1147px;top:150px;width:1px;height:11px;background:#000;"></div>
<svg style="left:1163.50px;top:152.60px" width="8" height="8" viewBox="-4 -4 8 8"><path d="M-1.700 -0.900L0.100 -2.300V2.500" fill="none" stroke="#886c8c" stroke-width="1.350"/></svg>
<div style="left:1148px;top:162px;width:38px;height:19px;background:#fff;"></div>
<div style="left:1147px;top:162px;width:1px;height:19px;background:#a0a0a0;"></div>
<div style="left:1187px;top:150px;width:38px;height:11px;background:#ff0000;"></div>
<div style="left:1186px;top:150px;width:1px;height:11px;background:#8c8c8c;"></div>
<span style="left:1204.41px;top:150.68px;font-size:15.0px;line-height:20px;color:#886c8c;font-weight:700;transform-origin:0 0;transform:scale(0.5000,0.5000);-webkit-text-stroke:0.5px #886c8c;">2</span>
<div style="left:1187px;top:162px;width:38px;height:19px;background:#fff;"></div>
<div style="left:1186px;top:162px;width:1px;height:19px;background:#a0a0a0;"></div>
<div style="left:1226px;top:150px;width:38px;height:11px;background:#00ff00;"></div>
<div style="left:1225px;top:150px;width:1px;height:11px;background:#8c8c8c;"></div>
<span style="left:1243.41px;top:150.68px;font-size:15.0px;line-height:20px;color:#886c8c;font-weight:700;transform-origin:0 0;transform:scale(0.5000,0.5000);-webkit-text-stroke:0.5px #886c8c;">3</span>
<div style="left:1226px;top:162px;width:38px;height:19px;background:#e6e6e8;"></div>
<div style="left:1225px;top:162px;width:1px;height:19px;background:#a0a0a0;"></div>
<div style="left:1265px;top:150px;width:39px;height:11px;background:#00ff00;"></div>
<div style="left:1264px;top:150px;width:1px;height:11px;background:#8c8c8c;"></div>
<span style="left:1282.91px;top:150.68px;font-size:15.0px;line-height:20px;color:#886c8c;font-weight:700;transform-origin:0 0;transform:scale(0.5000,0.5000);-webkit-text-stroke:0.5px #886c8c;">4</span>
<div style="left:1265px;top:162px;width:39px;height:19px;background:#e6e6e8;"></div>
<div style="left:1264px;top:162px;width:1px;height:19px;background:#a0a0a0;"></div>
<div style="left:1305px;top:150px;width:38px;height:11px;background:#00ff00;"></div>
<div style="left:1304px;top:150px;width:1px;height:11px;background:#8c8c8c;"></div>
<span style="left:1322.41px;top:150.68px;font-size:15.0px;line-height:20px;color:#886c8c;font-weight:700;transform-origin:0 0;transform:scale(0.5000,0.5000);-webkit-text-stroke:0.5px #886c8c;">5</span>
<div style="left:1305px;top:162px;width:38px;height:19px;background:#e6e6e8;"></div>
<div style="left:1304px;top:162px;width:1px;height:19px;background:#a0a0a0;"></div>
<div style="left:1344px;top:150px;width:38px;height:11px;background:#00ff00;"></div>
<div style="left:1343px;top:150px;width:1px;height:11px;background:#8c8c8c;"></div>
<span style="left:1361.41px;top:150.68px;font-size:15.0px;line-height:20px;color:#886c8c;font-weight:700;transform-origin:0 0;transform:scale(0.5000,0.5000);-webkit-text-stroke:0.5px #886c8c;">6</span>
<div style="left:1344px;top:162px;width:38px;height:19px;background:#e6e6e8;"></div>
<div style="left:1343px;top:162px;width:1px;height:19px;background:#a0a0a0;"></div>
<div style="left:1383px;top:150px;width:39px;height:11px;background:#d0cfd4;"></div>
<div style="left:1382px;top:150px;width:1px;height:11px;background:#8c8c8c;"></div>
<span style="left:1400.91px;top:150.68px;font-size:15.0px;line-height:20px;color:#886c8c;font-weight:700;transform-origin:0 0;transform:scale(0.5000,0.5000);-webkit-text-stroke:0.5px #886c8c;">7</span>
<div style="left:1383px;top:162px;width:39px;height:19px;background:#e6e6e8;"></div>
<div style="left:1382px;top:162px;width:1px;height:19px;background:#a0a0a0;"></div>
<svg style="left:1398.5px;top:166.8px" width="8" height="8" viewBox="0 0 8 8"><path d="M1.200 1.200L6.800 6.800M6.800 1.200L1.200 6.800" stroke="#111" stroke-width="1" fill="none"/></svg>
<div style="left:1148px;top:149px;width:275px;height:1px;background:#b0a4b4;"></div>
<div style="left:440px;top:150px;width:39px;height:11px;background:#ff0000;border:2px solid #ffff00;box-sizing:border-box;"></div>
<span style="left:457.91px;top:150.68px;font-size:15.0px;line-height:20px;color:#6a8a92;font-weight:700;transform-origin:0 0;transform:scale(0.5000,0.5000);-webkit-text-stroke:0.5px #6a8a92;">4</span>
<div style="left:19px;top:162px;width:28px;height:19px;background:#e6e6e8;"></div>
<div style="left:19px;top:182px;width:28px;height:7px;background:#e6e6e8;"></div>
<div style="left:19px;top:190px;width:28px;height:26px;background:#ffff3c;"></div>
<div style="left:19px;top:217px;width:28px;height:26px;background:#d0cfd4;"></div>
<div style="left:48px;top:182px;width:1374px;height:7px;background:#e6e6e8;"></div>
<div style="left:86px;top:190px;width:1px;height:53px;background:#b4b3b8;"></div>
<div style="left:125px;top:190px;width:1px;height:53px;background:#b4b3b8;"></div>
<div style="left:164px;top:190px;width:1px;height:53px;background:#b4b3b8;"></div>
<div style="left:204px;top:190px;width:1px;height:53px;background:#b4b3b8;"></div>
<div style="left:243px;top:190px;width:1px;height:53px;background:#b4b3b8;"></div>
<div style="left:282px;top:190px;width:1px;height:53px;background:#b4b3b8;"></div>
<div style="left:361px;top:190px;width:1px;height:53px;background:#b4b3b8;"></div>
<div style="left:400px;top:190px;width:1px;height:53px;background:#b4b3b8;"></div>
<div style="left:439px;top:190px;width:1px;height:53px;background:#b4b3b8;"></div>
<div style="left:479px;top:190px;width:1px;height:53px;background:#b4b3b8;"></div>
<div style="left:518px;top:190px;width:1px;height:53px;background:#b4b3b8;"></div>
<div style="left:557px;top:190px;width:1px;height:53px;background:#b4b3b8;"></div>
<div style="left:636px;top:190px;width:1px;height:53px;background:#b4b3b8;"></div>
<div style="left:675px;top:190px;width:1px;height:53px;background:#b4b3b8;"></div>
<div style="left:714px;top:190px;width:1px;height:53px;background:#b4b3b8;"></div>
<div style="left:754px;top:190px;width:1px;height:53px;background:#b4b3b8;"></div>
<div style="left:793px;top:190px;width:1px;height:53px;background:#b4b3b8;"></div>
<div style="left:832px;top:190px;width:1px;height:53px;background:#b4b3b8;"></div>
<div style="left:911px;top:190px;width:1px;height:53px;background:#b4b3b8;"></div>
<div style="left:950px;top:190px;width:1px;height:53px;background:#b4b3b8;"></div>
<div style="left:989px;top:190px;width:1px;height:53px;background:#b4b3b8;"></div>
<div style="left:1029px;top:190px;width:1px;height:53px;background:#b4b3b8;"></div>
<div style="left:1068px;top:190px;width:1px;height:53px;background:#b4b3b8;"></div>
<div style="left:1107px;top:190px;width:1px;height:53px;background:#b4b3b8;"></div>
<div style="left:1186px;top:190px;width:1px;height:53px;background:#b4b3b8;"></div>
<div style="left:1225px;top:190px;width:1px;height:53px;background:#b4b3b8;"></div>
<div style="left:1264px;top:190px;width:1px;height:53px;background:#b4b3b8;"></div>
<div style="left:1304px;top:190px;width:1px;height:53px;background:#b4b3b8;"></div>
<div style="left:1343px;top:190px;width:1px;height:53px;background:#b4b3b8;"></div>
<div style="left:1382px;top:190px;width:1px;height:53px;background:#b4b3b8;"></div>
<div style="left:19px;top:161px;width:1403px;height:1px;background:#000;"></div>
<div style="left:19px;top:181px;width:1403px;height:1px;background:#000;"></div>
<div style="left:19px;top:189px;width:1403px;height:1px;background:#000;"></div>
<div style="left:19px;top:216px;width:1403px;height:1px;background:#000;"></div>
<div style="left:20px;top:243px;width:1402px;height:1px;background:#000;"></div>
<div style="left:47px;top:162px;width:1px;height:27px;background:#000;"></div>
<div style="left:47px;top:190px;width:1px;height:53px;background:#808080;"></div>
<div style="left:322px;top:135px;width:1px;height:108px;background:#000;"></div>
<div style="left:597px;top:135px;width:1px;height:108px;background:#000;"></div>
<div style="left:872px;top:135px;width:1px;height:108px;background:#000;"></div>
<div style="left:1147px;top:135px;width:1px;height:108px;background:#000;"></div>
<span style="left:26.00px;top:164.82px;font-size:20.4px;line-height:27px;color:#000;font-weight:400;transform-origin:0 0;transform:scale(0.4425,0.5000);">ΤΣΙ</span>
<span style="left:25.85px;top:197.10px;font-size:11px;line-height:14px;color:#000;font-weight:400;letter-spacing:-0.269px;">A1</span>
<span style="left:25.55px;top:224.15px;font-size:11px;line-height:14px;color:#000;font-weight:400;letter-spacing:1.431px;">A2</span>
<div style="left:76px;top:195px;width:21px;height:15px;background:#ff8080;border:1px solid #000;box-sizing:border-box;"></div>
<div style="left:115px;top:195px;width:21px;height:15px;background:#808000;border:1px solid #000;box-sizing:border-box;"></div>
<div style="left:155px;top:195px;width:20px;height:15px;background:#800080;border:1px solid #000;box-sizing:border-box;"></div>
<div style="left:194px;top:195px;width:20px;height:15px;background:#ccff66;border:1px solid #000;box-sizing:border-box;"></div>
<div style="left:233px;top:195px;width:21px;height:15px;background:#ff0000;border:1px solid #000;box-sizing:border-box;"></div>
<div style="left:272px;top:195px;width:21px;height:15px;background:#ccff66;border:1px solid #000;box-sizing:border-box;"></div>
<div style="left:322px;top:195px;width:10px;height:15px;background:#00ff00;border:1px solid #000;box-sizing:border-box;"></div>
<div style="left:351px;top:195px;width:21px;height:15px;background:#008080;border:1px solid #000;box-sizing:border-box;"></div>
<div style="left:390px;top:195px;width:21px;height:15px;background:#008000;border:1px solid #000;box-sizing:border-box;"></div>
<div style="left:430px;top:195px;width:20px;height:15px;background:#14c000;border:1px solid #000;box-sizing:border-box;"></div>
<div style="left:469px;top:195px;width:20px;height:15px;background:#808000;border:1px solid #000;box-sizing:border-box;"></div>
<div style="left:508px;top:195px;width:21px;height:15px;background:#ffc0c0;border:1px solid #000;box-sizing:border-box;"></div>
<div style="left:547px;top:195px;width:21px;height:15px;background:#d0cfd4;border:1px solid #000;box-sizing:border-box;"></div>
<span style="left:555.43px;top:197.61px;font-size:8.5px;line-height:11px;color:#000;font-weight:400;letter-spacing:0.000px;">?</span>
<div style="left:597px;top:195px;width:10px;height:15px;background:#800000;border:1px solid #000;box-sizing:border-box;"></div>
<div style="left:626px;top:195px;width:21px;height:15px;background:#80c0ff;border:1px solid #000;box-sizing:border-box;"></div>
<div style="left:665px;top:195px;width:21px;height:15px;background:#00ffff;border:1px solid #000;box-sizing:border-box;"></div>
<div style="left:705px;top:195px;width:20px;height:15px;background:#ffff00;border:1px solid #000;box-sizing:border-box;"></div>
<div style="left:744px;top:195px;width:20px;height:15px;background:#c0ffff;border:1px solid #000;box-sizing:border-box;"></div>
<div style="left:783px;top:195px;width:21px;height:15px;background:#c0c000;border:1px solid #000;box-sizing:border-box;"></div>
<div style="left:822px;top:195px;width:21px;height:15px;background:#8000ff;border:1px solid #000;box-sizing:border-box;"></div>
<div style="left:872px;top:195px;width:10px;height:15px;background:#800080;border:1px solid #000;box-sizing:border-box;"></div>
<div style="left:901px;top:195px;width:21px;height:15px;background:#ffff00;border:1px solid #000;box-sizing:border-box;"></div>
<div style="left:940px;top:195px;width:21px;height:15px;background:#00c0ff;border:1px solid #000;box-sizing:border-box;"></div>
<div style="left:980px;top:195px;width:20px;height:15px;background:#ffc030;border:1px solid #000;box-sizing:border-box;"></div>
<div style="left:1019px;top:195px;width:20px;height:15px;background:#00ff80;border:1px solid #000;box-sizing:border-box;"></div>
<div style="left:1058px;top:195px;width:21px;height:15px;background:#008000;border:1px solid #000;box-sizing:border-box;"></div>
<div style="left:1097px;top:195px;width:21px;height:15px;background:#c0ffff;border:1px solid #000;box-sizing:border-box;"></div>
<div style="left:1147px;top:195px;width:10px;height:15px;background:#00c0ff;border:1px solid #000;box-sizing:border-box;"></div>
<div style="left:1176px;top:195px;width:21px;height:15px;background:#808080;border:1px solid #000;box-sizing:border-box;"></div>
<div style="left:1215px;top:195px;width:21px;height:15px;background:#808080;border:1px solid #000;box-sizing:border-box;"></div>
<div style="left:1255px;top:195px;width:20px;height:15px;background:#00c0c8;border:1px solid #000;box-sizing:border-box;"></div>
<div style="left:1294px;top:195px;width:20px;height:15px;background:#14c000;border:1px solid #000;box-sizing:border-box;"></div>
<div style="left:1333px;top:195px;width:21px;height:15px;background:#800000;border:1px solid #000;box-sizing:border-box;"></div>
<div style="left:1372px;top:195px;width:21px;height:15px;background:#66ffc0;border:1px solid #000;box-sizing:border-box;"></div>
<div style="left:76px;top:222px;width:21px;height:15px;background:#8000ff;border:1px solid #000;box-sizing:border-box;"></div>
<div style="left:115px;top:222px;width:21px;height:15px;background:#0000ff;border:1px solid #000;box-sizing:border-box;"></div>
<div style="left:155px;top:222px;width:20px;height:15px;background:#ffc0c0;border:1px solid #000;box-sizing:border-box;"></div>
<div style="left:194px;top:222px;width:20px;height:15px;background:#80ff80;border:1px solid #000;box-sizing:border-box;"></div>
<div style="left:272px;top:222px;width:21px;height:15px;background:#ff00ff;border:1px solid #000;box-sizing:border-box;"></div>
<div style="left:322px;top:222px;width:10px;height:15px;background:#00c0ff;border:1px solid #000;box-sizing:border-box;"></div>
<div style="left:351px;top:222px;width:21px;height:15px;background:#00ffc0;border:1px solid #000;box-sizing:border-box;"></div>
<div style="left:390px;top:222px;width:21px;height:15px;background:#c0c000;border:1px solid #000;box-sizing:border-box;"></div>
<div style="left:430px;top:222px;width:20px;height:15px;background:#18c0c0;border:1px solid #000;box-sizing:border-box;"></div>
<div style="left:469px;top:222px;width:20px;height:15px;background:#18c038;border:1px solid #000;box-sizing:border-box;"></div>
<div style="left:508px;top:222px;width:21px;height:15px;background:#66ffc0;border:1px solid #000;box-sizing:border-box;"></div>
<div style="left:547px;top:222px;width:21px;height:15px;background:#0080ff;border:1px solid #000;box-sizing:border-box;"></div>
<div style="left:597px;top:222px;width:10px;height:15px;background:#800080;border:1px solid #000;box-sizing:border-box;"></div>
<div style="left:626px;top:222px;width:21px;height:15px;background:#800000;border:1px solid #000;box-sizing:border-box;"></div>
<div style="left:665px;top:222px;width:21px;height:15px;background:#ffffff;border:1px solid #000;box-sizing:border-box;"></div>
<div style="left:705px;top:222px;width:20px;height:15px;background:#ffc000;border:1px solid #000;box-sizing:border-box;"></div>
<div style="left:744px;top:222px;width:20px;height:15px;background:#ccff66;border:1px solid #000;box-sizing:border-box;"></div>
<div style="left:783px;top:222px;width:21px;height:15px;background:#00ff00;border:1px solid #000;box-sizing:border-box;"></div>
<div style="left:822px;top:222px;width:21px;height:15px;background:#ff8080;border:1px solid #000;box-sizing:border-box;"></div>
<div style="left:872px;top:222px;width:10px;height:15px;background:#00ff00;border:1px solid #000;box-sizing:border-box;"></div>
<div style="left:901px;top:222px;width:21px;height:15px;background:#0000ff;border:1px solid #000;box-sizing:border-box;"></div>
<div style="left:940px;top:222px;width:21px;height:15px;background:#808000;border:1px solid #000;box-sizing:border-box;"></div>
<div style="left:980px;top:222px;width:20px;height:15px;background:#00ffc0;border:1px solid #000;box-sizing:border-box;"></div>
<div style="left:1019px;top:222px;width:20px;height:15px;background:#00ffff;border:1px solid #000;box-sizing:border-box;"></div>
<div style="left:1058px;top:222px;width:21px;height:15px;background:#80ff80;border:1px solid #000;box-sizing:border-box;"></div>
<div style="left:1097px;top:222px;width:21px;height:15px;background:#008080;border:1px solid #000;box-sizing:border-box;"></div>
<div style="left:1147px;top:222px;width:10px;height:15px;background:#ffc000;border:1px solid #000;box-sizing:border-box;"></div>
<div style="left:1176px;top:222px;width:21px;height:15px;background:#ff00ff;border:1px solid #000;box-sizing:border-box;"></div>
<div style="left:1215px;top:222px;width:21px;height:15px;background:#80c0ff;border:1px solid #000;box-sizing:border-box;"></div>
<div style="left:1255px;top:222px;width:20px;height:15px;background:#18c038;border:1px solid #000;box-sizing:border-box;"></div>
<div style="left:1294px;top:222px;width:20px;height:15px;background:#00c0c8;border:1px solid #000;box-sizing:border-box;"></div>
<div style="left:1333px;top:222px;width:21px;height:15px;background:#ffc030;border:1px solid #000;box-sizing:border-box;"></div>
<div style="left:1372px;top:222px;width:21px;height:15px;background:#ff8000;border:1px solid #000;box-sizing:border-box;"></div>
<div style="left:194px;top:222px;width:21px;height:15px;background:#80ff80;border:1px solid #000;box-sizing:border-box;"></div>
<div style="left:214px;top:222px;width:21px;height:15px;background:#808000;border:1px solid #000;box-sizing:border-box;"></div>
<div style="left:233px;top:222px;width:21px;height:15px;background:#d0cfd4;border:1px solid #000;box-sizing:border-box;"></div>
<span style="left:241.43px;top:224.61px;font-size:8.5px;line-height:11px;color:#000;font-weight:400;letter-spacing:0.000px;">?</span>
<div style="left:322px;top:190px;width:1px;height:53px;background:#000;"></div>
<div style="left:597px;top:190px;width:1px;height:53px;background:#000;"></div>
<div style="left:872px;top:190px;width:1px;height:53px;background:#000;"></div>
<div style="left:1147px;top:190px;width:1px;height:53px;background:#000;"></div>
<div style="left:115px;top:166px;width:21px;height:11px;background:#d0cfd4;border:1px solid #000;box-sizing:border-box;"></div>
<div style="left:213px;top:166px;width:21px;height:11px;background:#d0cfd4;border:1px solid #000;box-sizing:border-box;"></div>
<div style="left:469px;top:166px;width:20px;height:11px;background:#d0cfd4;border:1px solid #000;box-sizing:border-box;"></div>
<div style="left:940px;top:166px;width:21px;height:11px;background:#d0cfd4;border:1px solid #000;box-sizing:border-box;"></div>
<div style="left:58.30px;top:162.50px;width:18.4px;height:18.4px;border-radius:50%;background:#e84646;box-shadow:0 0.5px 1.5px rgba(60,80,90,.55);"></div>
<span style="left:63.60px;top:162.54px;font-size:14px;line-height:18px;color:#fff;font-weight:400;letter-spacing:0.000px;-webkit-text-stroke:0.25px #e84646;">3</span>
<div style="left:115.90px;top:174.40px;width:18.4px;height:18.4px;border-radius:50%;background:#e84646;box-shadow:0 0.5px 1.5px rgba(60,80,90,.55);"></div>
<span style="left:121.20px;top:174.44px;font-size:14px;line-height:18px;color:#fff;font-weight:400;letter-spacing:0.000px;-webkit-text-stroke:0.25px #e84646;">5</span>
<div style="left:195.20px;top:172.70px;width:18.4px;height:18.4px;border-radius:50%;background:#e84646;box-shadow:0 0.5px 1.5px rgba(60,80,90,.55);"></div>
<span style="left:200.50px;top:172.74px;font-size:14px;line-height:18px;color:#fff;font-weight:400;letter-spacing:0.000px;-webkit-text-stroke:0.25px #e84646;">4</span>
<div style="left:252.40px;top:207.30px;width:18.4px;height:18.4px;border-radius:50%;background:#e84646;box-shadow:0 0.5px 1.5px rgba(60,80,90,.55);"></div>
<span style="left:257.70px;top:207.34px;font-size:14px;line-height:18px;color:#fff;font-weight:400;letter-spacing:0.000px;-webkit-text-stroke:0.25px #e84646;">6</span>
<svg style="left:0;top:135px" width="20" height="750" viewBox="0 135 20 750"><polygon points="18.5,142.2 2.5,150 2.5,172.3 18.5,179.5" fill="#d0cfd4" stroke="#000" stroke-width="1.2" stroke-linejoin="miter"/><polygon points="18.5,174.2 2.5,182 2.5,256 18.5,263.2" fill="#d0cfd4" stroke="#000" stroke-width="1.2" stroke-linejoin="miter"/><polygon points="18.5,258.2 2.5,266 2.5,315.7 18.5,322.9" fill="#d0cfd4" stroke="#000" stroke-width="1.2" stroke-linejoin="miter"/><polygon points="18.5,317.4 2.5,325.2 2.5,382.2 18.5,389.4" fill="#d0cfd4" stroke="#000" stroke-width="1.2" stroke-linejoin="miter"/><polygon points="18.5,454.2 2.5,462 2.5,572 18.5,579.2" fill="#d0cfd4" stroke="#000" stroke-width="1.2" stroke-linejoin="miter"/><polygon points="18.5,574.2 2.5,582 2.5,641.5 18.5,648.7" fill="#d0cfd4" stroke="#000" stroke-width="1.2" stroke-linejoin="miter"/><polygon points="18.5,384.0 2.5,391.8 2.5,451.4 18.5,458.59999999999997" fill="#fff" stroke="#000" stroke-width="1.2" stroke-linejoin="miter"/></svg>
<span style="left:10.0px;top:160.5px;font-size:12.3px;line-height:13px;letter-spacing:-0.164px;margin-right:0.164px;color:#000;transform:translate(-50%,-50%) rotate(-90deg);">Όλο</span>
<span style="left:10.0px;top:218.0px;font-size:12.3px;line-height:13px;letter-spacing:-0.143px;margin-right:0.143px;color:#000;transform:translate(-50%,-50%) rotate(-90deg);">Εκπαιδευτικοί</span>
<span style="left:10.0px;top:290.0px;font-size:12.3px;line-height:13px;letter-spacing:-0.192px;margin-right:0.192px;color:#000;transform:translate(-50%,-50%) rotate(-90deg);">Αίθουσες</span>
<span style="left:10.0px;top:353.5px;font-size:12.3px;line-height:13px;letter-spacing:0.138px;margin-right:-0.138px;color:#000;transform:translate(-50%,-50%) rotate(-90deg);">Μαθήματα</span>
<span style="left:10.0px;top:420.5px;font-size:12.3px;line-height:13px;letter-spacing:-0.174px;margin-right:0.174px;color:#000;transform:translate(-50%,-50%) rotate(-90deg);">Επιτήρηση</span>
<span style="left:10.0px;top:516.2px;font-size:12.3px;line-height:13px;letter-spacing:-0.218px;margin-right:0.218px;color:#000;transform:translate(-50%,-50%) rotate(-90deg);">Πίνακας Μαθημάτων</span>
<span style="left:10.0px;top:612.8px;font-size:12.3px;line-height:13px;letter-spacing:-0.393px;margin-right:0.393px;color:#000;transform:translate(-50%,-50%) rotate(-90deg);">Προβολή 1</span>
<div style="left:250px;top:234px;width:882px;height:453px;background:#fafafa;border:1px solid #8c8c8c;box-sizing:border-box;border-radius:2px;"></div>
<div style="left:252px;top:264px;width:25px;height:421px;background:#f0f0f0;"></div>
<div style="left:277px;top:264px;width:1px;height:421px;background:#dcdcdc;"></div>
<div style="left:252px;top:236px;width:332px;height:28px;background:#e3eefd;"></div>
<span style="left:258.95px;top:243.35px;font-size:11px;line-height:14px;color:#1e4b9b;font-weight:700;letter-spacing:0.240px;">4/5 (15)</span>
<span style="left:286.05px;top:267.15px;font-size:11px;line-height:14px;color:#0c0c66;font-weight:400;letter-spacing:0.390px;">Διαγραφή Υπεύθ. Αίθουσας</span>
<span style="left:286.05px;top:289.15px;font-size:11px;line-height:14px;color:#0c0c66;font-weight:400;letter-spacing:0.272px;">Κλείδωμα</span>
<span style="left:286.05px;top:311.15px;font-size:11px;line-height:14px;color:#0c0c66;font-weight:400;letter-spacing:0.458px;">Πλήθος</span>
<span style="left:286.05px;top:335.15px;font-size:11px;line-height:14px;color:#0c0c66;font-weight:400;letter-spacing:0.739px;">Δημιουργία</span>
<span style="left:286.05px;top:357.15px;font-size:11px;line-height:14px;color:#0c0c66;font-weight:400;letter-spacing:0.425px;">Αφαίρεση όλων των εκπαιδευτικών από επιτήρηση</span>
<span style="left:286.05px;top:381.15px;font-size:11px;line-height:14px;color:#0c0c66;font-weight:400;letter-spacing:0.344px;">Χωρίς εκπαιδευτικό</span>
<div style="left:286px;top:329px;width:298px;height:1px;background:#c8c8c8;"></div>
<div style="left:286px;top:375px;width:298px;height:1px;background:#c8c8c8;"></div>
<svg style="left:570px;top:314px" width="5" height="9" viewBox="0 0 5 9"><path d="M0.5 1L4.5 4.5L0.5 8Z" fill="#4a5a9a"/></svg>
<svg style="left:258px;top:286px" width="14" height="19" viewBox="0 0 14 19">
<circle cx="6.900" cy="12.400" r="4.700" fill="#dcedfc" stroke="#86b4ec" stroke-width="1.700"/>
<path d="M5 9.600V4.800L7 2.600L9.100 4.800V9.600" fill="none" stroke="#000" stroke-width="1.900" stroke-linejoin="round"/>
<circle cx="6.900" cy="13.300" r="0.900" fill="#8a9aa8"/></svg>
<div style="left:255px;top:378px;width:20px;height:20px;background:#dbeafb;border:1px solid #8a9ccc;border-radius:3px;box-sizing:border-box;"></div>
<svg style="left:259px;top:382px" width="12" height="12" viewBox="0 0 12 12"><path d="M1.6 6.4L4.4 10.4L9.8 1.4" fill="none" stroke="#1c1c70" stroke-width="1.25"/></svg>
<span style="left:286.05px;top:403.15px;font-size:11px;line-height:14px;color:#0c0c66;font-weight:400;letter-spacing:-0.182px;">(ΜΑΣ) ΜΑΣΩΝΟΥ</span>
<span style="left:375.35px;top:403.15px;font-size:11px;line-height:14px;color:#0c0c66;font-weight:400;letter-spacing:-0.310px;">(30/2)</span>
<span style="left:406.35px;top:403.15px;font-size:11px;line-height:14px;color:#0c0c66;font-weight:400;letter-spacing:0.256px;">(-/3 Μέγιστο)</span>
<div style="left:258px;top:407px;width:7px;height:7px;background:#0070c0;"></div>
<div style="left:266px;top:407px;width:7px;height:7px;background:#0070c0;"></div>
<span style="left:286.05px;top:425.15px;font-size:11px;line-height:14px;color:#0c0c66;font-weight:400;letter-spacing:-0.062px;">(ΜΑΝ) ΜΑΝΤΑ</span>
<span style="left:360.75px;top:425.15px;font-size:11px;line-height:14px;color:#0c0c66;font-weight:400;letter-spacing:-0.310px;">(30/2)</span>
<span style="left:391.75px;top:425.15px;font-size:11px;line-height:14px;color:#0c0c66;font-weight:400;letter-spacing:0.256px;">(-/3 Μέγιστο)</span>
<div style="left:258px;top:429px;width:7px;height:7px;background:#0070c0;"></div>
<div style="left:266px;top:429px;width:7px;height:7px;background:#0070c0;"></div>
<span style="left:286.05px;top:447.15px;font-size:11px;line-height:14px;color:#0c0c66;font-weight:400;letter-spacing:-0.521px;">(ΚΑΡ) ΚΑΡΑΜΑΡΑΣ</span>
<span style="left:379.65px;top:447.15px;font-size:11px;line-height:14px;color:#0c0c66;font-weight:400;letter-spacing:-0.310px;">(15/1)</span>
<span style="left:410.65px;top:447.15px;font-size:11px;line-height:14px;color:#0c0c66;font-weight:400;letter-spacing:0.256px;">(-/3 Μέγιστο)</span>
<div style="left:258px;top:451px;width:7px;height:7px;background:#0070c0;"></div>
<div style="left:266px;top:451px;width:7px;height:7px;background:#0070c0;"></div>
<span style="left:286.05px;top:469.15px;font-size:11px;line-height:14px;color:#0c0c66;font-weight:400;letter-spacing:-0.162px;">(ΜΠΙ) ΜΠΙΣΤΟΛΑΣ</span>
<span style="left:380.45px;top:469.15px;font-size:11px;line-height:14px;color:#0c0c66;font-weight:400;letter-spacing:-0.310px;">(30/2)</span>
<span style="left:411.45px;top:469.15px;font-size:11px;line-height:14px;color:#0c0c66;font-weight:400;letter-spacing:0.256px;">(-/3 Μέγιστο)</span>
<div style="left:258px;top:473px;width:7px;height:7px;background:#0070c0;"></div>
<div style="left:266px;top:473px;width:7px;height:7px;background:#0070c0;"></div>
<span style="left:286.05px;top:491.15px;font-size:11px;line-height:14px;color:#0c0c66;font-weight:400;letter-spacing:-0.621px;">(ΓΕΡ) ΓΕΡΟΛΥΜΑΤΟΣ</span>
<span style="left:390.55px;top:491.15px;font-size:11px;line-height:14px;color:#0c0c66;font-weight:400;letter-spacing:-0.310px;">(30/2)</span>
<span style="left:421.55px;top:491.15px;font-size:11px;line-height:14px;color:#0c0c66;font-weight:400;letter-spacing:0.256px;">(-/3 Μέγιστο)</span>
<div style="left:258px;top:495px;width:7px;height:7px;background:#0070c0;"></div>
<div style="left:266px;top:495px;width:7px;height:7px;background:#0070c0;"></div>
<span style="left:286.05px;top:513.15px;font-size:11px;line-height:14px;color:#0c0c66;font-weight:400;letter-spacing:-0.729px;">(ΤΣΙ) ΤΣΙΚΗΣ</span>
<span style="left:346.25px;top:513.15px;font-size:11px;line-height:14px;color:#0c0c66;font-weight:400;letter-spacing:-0.310px;">(75/3)</span>
<span style="left:377.25px;top:513.15px;font-size:11px;line-height:14px;color:#0c0c66;font-weight:400;letter-spacing:0.256px;">(-/3 Μέγιστο)</span>
<div style="left:258px;top:517px;width:7px;height:7px;background:#0070c0;"></div>
<div style="left:266px;top:517px;width:7px;height:7px;background:#fff;border:1px solid #000;box-sizing:border-box;"></div>
<span style="left:286.05px;top:535.15px;font-size:11px;line-height:14px;color:#0c0c66;font-weight:400;letter-spacing:-0.175px;">(ΜΠΑ) ΜΠΑΡΔΑΚΟΣ</span>
<span style="left:389.25px;top:535.15px;font-size:11px;line-height:14px;color:#0c0c66;font-weight:400;letter-spacing:-0.310px;">(30/2)</span>
<span style="left:420.25px;top:535.15px;font-size:11px;line-height:14px;color:#0c0c66;font-weight:400;letter-spacing:0.256px;">(-/3 Μέγιστο)</span>
<div style="left:258px;top:539px;width:7px;height:7px;background:#0070c0;"></div>
<div style="left:266px;top:539px;width:7px;height:7px;background:#fff;border:1px solid #000;box-sizing:border-box;"></div>
<span style="left:286.05px;top:557.15px;font-size:11px;line-height:14px;color:#0c0c66;font-weight:400;letter-spacing:-0.001px;">(ΜΠΙ) ΜΠΙΝΗΣ</span>
<span style="left:362.25px;top:557.15px;font-size:11px;line-height:14px;color:#0c0c66;font-weight:400;letter-spacing:-0.310px;">(30/2)</span>
<span style="left:393.25px;top:557.15px;font-size:11px;line-height:14px;color:#0c0c66;font-weight:400;letter-spacing:0.256px;">(-/3 Μέγιστο)</span>
<div style="left:258px;top:561px;width:7px;height:7px;background:#0070c0;"></div>
<div style="left:266px;top:561px;width:7px;height:7px;background:#fff;border:1px solid #000;box-sizing:border-box;"></div>
<span style="left:286.05px;top:579.15px;font-size:11px;line-height:14px;color:#0c0c66;font-weight:400;letter-spacing:-0.282px;">(ΜΠΟ) ΜΠΟΥΤΣΙΚΟΣ</span>
<span style="left:392.25px;top:579.15px;font-size:11px;line-height:14px;color:#0c0c66;font-weight:400;letter-spacing:-0.310px;">(35/3)</span>
<span style="left:423.25px;top:579.15px;font-size:11px;line-height:14px;color:#0c0c66;font-weight:400;letter-spacing:0.256px;">(-/3 Μέγιστο)</span>
<div style="left:258px;top:583px;width:7px;height:7px;background:#0070c0;"></div>
<div style="left:266px;top:583px;width:7px;height:7px;background:#fff;border:1px solid #000;box-sizing:border-box;"></div>
<span style="left:286.05px;top:601.15px;font-size:11px;line-height:14px;color:#0c0c66;font-weight:400;letter-spacing:-0.475px;">(ΚΑΠ) ΚΑΠΕΤΑΝΙΔΗΣ</span>
<span style="left:390.55px;top:601.15px;font-size:11px;line-height:14px;color:#0c0c66;font-weight:400;letter-spacing:-0.310px;">(30/2)</span>
<span style="left:421.55px;top:601.15px;font-size:11px;line-height:14px;color:#0c0c66;font-weight:400;letter-spacing:0.256px;">(-/3 Μέγιστο)</span>
<div style="left:258px;top:605px;width:7px;height:7px;background:#0070c0;"></div>
<div style="left:266px;top:605px;width:7px;height:7px;background:#fff;border:1px solid #000;box-sizing:border-box;"></div>
<span style="left:286.05px;top:623.15px;font-size:11px;line-height:14px;color:#0c0c66;font-weight:400;letter-spacing:-0.537px;">(ΧΑΛ) ΧΑΛΑΤΣΙΔΗ</span>
<span style="left:374.15px;top:623.15px;font-size:11px;line-height:14px;color:#0c0c66;font-weight:400;letter-spacing:-0.310px;">(15/1)</span>
<span style="left:405.15px;top:623.15px;font-size:11px;line-height:14px;color:#0c0c66;font-weight:400;letter-spacing:0.256px;">(-/3 Μέγιστο)</span>
<div style="left:258px;top:627px;width:7px;height:7px;background:#0070c0;"></div>
<div style="left:266px;top:627px;width:7px;height:7px;background:#fff;border:1px solid #000;box-sizing:border-box;"></div>
<span style="left:286.05px;top:645.15px;font-size:11px;line-height:14px;color:#0c0c66;font-weight:400;letter-spacing:-0.692px;">(ΤΣΟ) ΤΣΟΤΣΙΚΑΣ</span>
<span style="left:371.55px;top:645.15px;font-size:11px;line-height:14px;color:#0c0c66;font-weight:400;letter-spacing:-0.310px;">(30/2)</span>
<span style="left:402.55px;top:645.15px;font-size:11px;line-height:14px;color:#0c0c66;font-weight:400;letter-spacing:0.256px;">(-/3 Μέγιστο)</span>
<div style="left:258px;top:649px;width:7px;height:7px;background:#0070c0;"></div>
<div style="left:266px;top:649px;width:7px;height:7px;background:#fff;border:1px solid #000;box-sizing:border-box;"></div>
<span style="left:286.05px;top:667.15px;font-size:11px;line-height:14px;color:#0c0c66;font-weight:400;letter-spacing:-0.655px;">(ΚΑΡ) ΚΑΡΟΥΔΗΣ</span>
<span style="left:371.55px;top:667.15px;font-size:11px;line-height:14px;color:#0c0c66;font-weight:400;letter-spacing:-0.310px;">(30/2)</span>
<span style="left:402.55px;top:667.15px;font-size:11px;line-height:14px;color:#0c0c66;font-weight:400;letter-spacing:0.256px;">(-/3 Μέγιστο)</span>
<div style="left:258px;top:671px;width:7px;height:7px;background:#0070c0;"></div>
<div style="left:266px;top:671px;width:7px;height:7px;background:#fff;border:1px solid #000;box-sizing:border-box;"></div>
<span style="left:618.05px;top:240.15px;font-size:11px;line-height:14px;color:#0c0c66;font-weight:400;letter-spacing:-0.490px;">(ΓΚΟ) ΓΚΟΓΚΟΣΗΣ</span>
<span style="left:710.75px;top:240.15px;font-size:11px;line-height:14px;color:#0c0c66;font-weight:400;letter-spacing:-0.310px;">(45/3)</span>
<span style="left:741.75px;top:240.15px;font-size:11px;line-height:14px;color:#0c0c66;font-weight:400;letter-spacing:0.256px;">(-/3 Μέγιστο)</span>
<div style="left:590px;top:244px;width:7px;height:7px;background:#fff;border:1px solid #000;box-sizing:border-box;"></div>
<div style="left:598px;top:244px;width:7px;height:7px;background:#0070c0;"></div>
<span style="left:618.05px;top:262.15px;font-size:11px;line-height:14px;color:#0c0c66;font-weight:400;letter-spacing:-0.147px;">(ΑΜΑ) ΑΜΑΛΙΔΟΥ</span>
<span style="left:709.45px;top:262.15px;font-size:11px;line-height:14px;color:#0c0c66;font-weight:400;letter-spacing:-0.310px;">(30/2)</span>
<span style="left:740.45px;top:262.15px;font-size:11px;line-height:14px;color:#0c0c66;font-weight:400;letter-spacing:0.256px;">(-/3 Μέγιστο)</span>
<div style="left:590px;top:266px;width:7px;height:7px;background:#fff;border:1px solid #000;box-sizing:border-box;"></div>
<div style="left:598px;top:266px;width:7px;height:7px;background:#0070c0;"></div>
<span style="left:618.05px;top:284.15px;font-size:11px;line-height:14px;color:#0c0c66;font-weight:400;letter-spacing:-0.437px;">(ΛΕΛ) ΛΕΛΟΣ</span>
<span style="left:685.45px;top:284.15px;font-size:11px;line-height:14px;color:#0c0c66;font-weight:400;letter-spacing:-0.310px;">(30/2)</span>
<span style="left:716.45px;top:284.15px;font-size:11px;line-height:14px;color:#0c0c66;font-weight:400;letter-spacing:0.256px;">(-/3 Μέγιστο)</span>
<div style="left:590px;top:288px;width:7px;height:7px;background:#fff;border:1px solid #000;box-sizing:border-box;"></div>
<div style="left:598px;top:288px;width:7px;height:7px;background:#0070c0;"></div>
<span style="left:618.05px;top:306.15px;font-size:11px;line-height:14px;color:#0c0c66;font-weight:400;letter-spacing:-0.416px;">(ΚΑΤ) ΚΑΤΑΠΟΔΗΣ</span>
<span style="left:711.45px;top:306.15px;font-size:11px;line-height:14px;color:#0c0c66;font-weight:400;letter-spacing:-0.310px;">(30/2)</span>
<span style="left:742.45px;top:306.15px;font-size:11px;line-height:14px;color:#0c0c66;font-weight:400;letter-spacing:0.256px;">(-/3 Μέγιστο)</span>
<div style="left:590px;top:310px;width:7px;height:7px;background:#fff;border:1px solid #000;box-sizing:border-box;"></div>
<div style="left:598px;top:310px;width:7px;height:7px;background:#0070c0;"></div>
<span style="left:618.05px;top:328.15px;font-size:11px;line-height:14px;color:#0c0c66;font-weight:400;letter-spacing:-0.666px;">(ΡΙΖ) ΡΙΖΟΥ</span>
<span style="left:674.35px;top:328.15px;font-size:11px;line-height:14px;color:#0c0c66;font-weight:400;letter-spacing:-0.310px;">(35/3)</span>
<span style="left:705.35px;top:328.15px;font-size:11px;line-height:14px;color:#0c0c66;font-weight:400;letter-spacing:0.256px;">(-/3 Μέγιστο)</span>
<div style="left:590px;top:332px;width:7px;height:7px;background:#fff;border:1px solid #000;box-sizing:border-box;"></div>
<div style="left:598px;top:332px;width:7px;height:7px;background:#0070c0;"></div>
<span style="left:618.05px;top:350.15px;font-size:11px;line-height:14px;color:#0c0c66;font-weight:400;letter-spacing:-0.186px;">(ΜΠΕ) ΜΠΕΛΟΣ</span>
<span style="left:700.55px;top:350.15px;font-size:11px;line-height:14px;color:#0c0c66;font-weight:400;letter-spacing:-0.310px;">(30/2)</span>
<span style="left:731.55px;top:350.15px;font-size:11px;line-height:14px;color:#0c0c66;font-weight:400;letter-spacing:0.256px;">(-/3 Μέγιστο)</span>
<div style="left:590px;top:354px;width:7px;height:7px;background:#fff;border:1px solid #000;box-sizing:border-box;"></div>
<div style="left:598px;top:354px;width:7px;height:7px;background:#0070c0;"></div>
<span style="left:618.05px;top:372.15px;font-size:11px;line-height:14px;color:#0c0c66;font-weight:400;letter-spacing:-0.656px;">(ΤΣΟ) ΤΣΟΚΑΣ</span>
<span style="left:689.45px;top:372.15px;font-size:11px;line-height:14px;color:#0c0c66;font-weight:400;letter-spacing:-0.310px;">(30/2)</span>
<span style="left:720.45px;top:372.15px;font-size:11px;line-height:14px;color:#0c0c66;font-weight:400;letter-spacing:0.256px;">(-/3 Μέγιστο)</span>
<div style="left:590px;top:376px;width:7px;height:7px;background:#fff;border:1px solid #000;box-sizing:border-box;"></div>
<div style="left:598px;top:376px;width:7px;height:7px;background:#0070c0;"></div>
<span style="left:618.05px;top:394.15px;font-size:11px;line-height:14px;color:#0c0c66;font-weight:400;letter-spacing:-0.272px;">(ΜΠΑ) ΜΠΑΙΧΤΗΣ</span>
<span style="left:708.45px;top:394.15px;font-size:11px;line-height:14px;color:#0c0c66;font-weight:400;letter-spacing:-0.310px;">(15/1)</span>
<span style="left:739.45px;top:394.15px;font-size:11px;line-height:14px;color:#0c0c66;font-weight:400;letter-spacing:0.256px;">(-/3 Μέγιστο)</span>
<div style="left:590px;top:398px;width:7px;height:7px;background:#fff;border:1px solid #000;box-sizing:border-box;"></div>
<div style="left:598px;top:398px;width:7px;height:7px;background:#0070c0;"></div>
<span style="left:618.05px;top:416.15px;font-size:11px;line-height:14px;color:#0c0c66;font-weight:400;letter-spacing:-0.329px;">(ΖΑΖ) ΖΑΖΟΠΟΥΛΟΣ</span>
<span style="left:721.55px;top:416.15px;font-size:11px;line-height:14px;color:#0c0c66;font-weight:400;letter-spacing:-0.310px;">(15/1)</span>
<span style="left:752.55px;top:416.15px;font-size:11px;line-height:14px;color:#0c0c66;font-weight:400;letter-spacing:0.256px;">(-/3 Μέγιστο)</span>
<div style="left:590px;top:420px;width:7px;height:7px;background:#fff;border:1px solid #000;box-sizing:border-box;"></div>
<div style="left:598px;top:420px;width:7px;height:7px;background:#0070c0;"></div>
<span style="left:618.05px;top:438.15px;font-size:11px;line-height:14px;color:#0c0c66;font-weight:400;letter-spacing:-0.154px;">(ΔΑΝ) ΔΑΝΙΗΛ</span>
<span style="left:692.55px;top:438.15px;font-size:11px;line-height:14px;color:#0c0c66;font-weight:400;letter-spacing:-0.310px;">(15/1)</span>
<span style="left:723.55px;top:438.15px;font-size:11px;line-height:14px;color:#0c0c66;font-weight:400;letter-spacing:0.256px;">(-/3 Μέγιστο)</span>
<div style="left:590px;top:442px;width:7px;height:7px;background:#fff;border:1px solid #000;box-sizing:border-box;"></div>
<div style="left:596px;top:442px;width:7px;height:7px;background:#fff;border:1px solid #000;box-sizing:border-box;"></div>
<span style="left:618.05px;top:460.15px;font-size:11px;line-height:14px;color:#0c0c66;font-weight:400;letter-spacing:-0.204px;">(ΜΠΑ) ΜΠΑΛΑΦΙΔΗΣ</span>
<span style="left:725.35px;top:460.15px;font-size:11px;line-height:14px;color:#0c0c66;font-weight:400;letter-spacing:-0.310px;">(40/3)</span>
<span style="left:756.35px;top:460.15px;font-size:11px;line-height:14px;color:#0c0c66;font-weight:400;letter-spacing:0.256px;">(-/3 Μέγιστο)</span>
<div style="left:590px;top:464px;width:7px;height:7px;background:#fff;border:1px solid #000;box-sizing:border-box;"></div>
<div style="left:596px;top:464px;width:7px;height:7px;background:#fff;border:1px solid #000;box-sizing:border-box;"></div>
<span style="left:618.05px;top:482.15px;font-size:11px;line-height:14px;color:#0c0c66;font-weight:400;letter-spacing:-0.851px;">(ΠΕΤ) ΠΕΤΡΟΥ</span>
<span style="left:688.75px;top:482.15px;font-size:11px;line-height:14px;color:#0c0c66;font-weight:400;letter-spacing:-0.310px;">(35/3)</span>
<span style="left:719.75px;top:482.15px;font-size:11px;line-height:14px;color:#0c0c66;font-weight:400;letter-spacing:0.256px;">(-/3 Μέγιστο)</span>
<div style="left:590px;top:486px;width:7px;height:7px;background:#fff;border:1px solid #000;box-sizing:border-box;"></div>
<div style="left:596px;top:486px;width:7px;height:7px;background:#fff;border:1px solid #000;box-sizing:border-box;"></div>
<span style="left:618.05px;top:504.15px;font-size:11px;line-height:14px;color:#0c0c66;font-weight:400;letter-spacing:-0.642px;">(ΚΑΤ) ΚΑΤΣΙΚΟΣ</span>
<span style="left:696.25px;top:504.15px;font-size:11px;line-height:14px;color:#0c0c66;font-weight:400;letter-spacing:-0.310px;">(30/2)</span>
<span style="left:727.25px;top:504.15px;font-size:11px;line-height:14px;color:#0c0c66;font-weight:400;letter-spacing:0.256px;">(-/3 Μέγιστο)</span>
<div style="left:590px;top:508px;width:7px;height:7px;background:#fff;border:1px solid #000;box-sizing:border-box;"></div>
<div style="left:596px;top:508px;width:7px;height:7px;background:#fff;border:1px solid #000;box-sizing:border-box;"></div>
<span style="left:618.05px;top:526.15px;font-size:11px;line-height:14px;color:#0c0c66;font-weight:400;letter-spacing:-0.583px;">(ΧΑΤ) ΧΑΤΖΙΝΑ</span>
<span style="left:690.45px;top:526.15px;font-size:11px;line-height:14px;color:#0c0c66;font-weight:400;letter-spacing:-0.310px;">(15/1)</span>
<span style="left:721.45px;top:526.15px;font-size:11px;line-height:14px;color:#0c0c66;font-weight:400;letter-spacing:0.256px;">(-/3 Μέγιστο)</span>
<div style="left:590px;top:530px;width:7px;height:7px;background:#fff;border:1px solid #000;box-sizing:border-box;"></div>
<div style="left:596px;top:530px;width:7px;height:7px;background:#fff;border:1px solid #000;box-sizing:border-box;"></div>
<span style="left:618.05px;top:548.15px;font-size:11px;line-height:14px;color:#0c0c66;font-weight:400;letter-spacing:0.017px;">(ΜΟΛ) ΜΟΛΛΑΣ</span>
<span style="left:702.65px;top:548.15px;font-size:11px;line-height:14px;color:#0c0c66;font-weight:400;letter-spacing:-0.310px;">(30/2)</span>
<span style="left:733.65px;top:548.15px;font-size:11px;line-height:14px;color:#0c0c66;font-weight:400;letter-spacing:0.256px;">(-/3 Μέγιστο)</span>
<div style="left:590px;top:552px;width:7px;height:7px;background:#fff;border:1px solid #000;box-sizing:border-box;"></div>
<div style="left:596px;top:552px;width:7px;height:7px;background:#fff;border:1px solid #000;box-sizing:border-box;"></div>
<span style="left:618.05px;top:570.15px;font-size:11px;line-height:14px;color:#0c0c66;font-weight:400;letter-spacing:-0.218px;">(ΗΛΙ) ΗΛΙΟΠΟΥΛΟΥ</span>
<span style="left:718.55px;top:570.15px;font-size:11px;line-height:14px;color:#0c0c66;font-weight:400;letter-spacing:-0.310px;">(25/2)</span>
<span style="left:749.55px;top:570.15px;font-size:11px;line-height:14px;color:#0c0c66;font-weight:400;letter-spacing:0.256px;">(-/3 Μέγιστο)</span>
<div style="left:590px;top:574px;width:7px;height:7px;background:#fff;border:1px solid #000;box-sizing:border-box;"></div>
<div style="left:596px;top:574px;width:7px;height:7px;background:#fff;border:1px solid #000;box-sizing:border-box;"></div>
<span style="left:618.05px;top:592.15px;font-size:11px;line-height:14px;color:#0c0c66;font-weight:400;letter-spacing:-0.507px;">(ΓΕΩ) ΓΕΩΡΓΙΑΔΗ</span>
<span style="left:706.45px;top:592.15px;font-size:11px;line-height:14px;color:#0c0c66;font-weight:400;letter-spacing:-0.310px;">(30/2)</span>
<span style="left:737.45px;top:592.15px;font-size:11px;line-height:14px;color:#0c0c66;font-weight:400;letter-spacing:0.256px;">(-/3 Μέγιστο)</span>
<div style="left:590px;top:596px;width:7px;height:7px;background:#fff;border:1px solid #000;box-sizing:border-box;"></div>
<div style="left:596px;top:596px;width:7px;height:7px;background:#fff;border:1px solid #000;box-sizing:border-box;"></div>
<span style="left:618.05px;top:614.15px;font-size:11px;line-height:14px;color:#0c0c66;font-weight:400;letter-spacing:-0.220px;">(ΒΑΪ) ΒΑΪΟΣ</span>
<span style="left:679.85px;top:614.15px;font-size:11px;line-height:14px;color:#0c0c66;font-weight:400;letter-spacing:-0.310px;">(30/2)</span>
<span style="left:710.85px;top:614.15px;font-size:11px;line-height:14px;color:#0c0c66;font-weight:400;letter-spacing:0.256px;">(-/3 Μέγιστο)</span>
<div style="left:590px;top:618px;width:7px;height:7px;background:#fff;border:1px solid #000;box-sizing:border-box;"></div>
<div style="left:596px;top:618px;width:7px;height:7px;background:#fff;border:1px solid #000;box-sizing:border-box;"></div>
<span style="left:618.05px;top:636.15px;font-size:11px;line-height:14px;color:#0c0c66;font-weight:400;letter-spacing:-0.662px;">(ΚΑΚ) ΚΑΚΟΣ</span>
<span style="left:683.65px;top:636.15px;font-size:11px;line-height:14px;color:#0c0c66;font-weight:400;letter-spacing:-0.310px;">(30/2)</span>
<span style="left:714.65px;top:636.15px;font-size:11px;line-height:14px;color:#0c0c66;font-weight:400;letter-spacing:0.256px;">(-/3 Μέγιστο)</span>
<div style="left:593px;top:640px;width:7px;height:7px;background:#ed1c24;"></div>
<span style="left:618.05px;top:658.15px;font-size:11px;line-height:14px;color:#0c0c66;font-weight:400;letter-spacing:-0.556px;">(ΝΟΥ) ΝΟΥΤΣΗ</span>
<span style="left:693.55px;top:658.15px;font-size:11px;line-height:14px;color:#0c0c66;font-weight:400;letter-spacing:-0.381px;">(0/0)</span>
<span style="left:718.45px;top:658.15px;font-size:11px;line-height:14px;color:#0c0c66;font-weight:400;letter-spacing:0.256px;">(-/3 Μέγιστο)</span>
<div style="left:593px;top:662px;width:7px;height:7px;background:#ed1c24;"></div>
<span style="left:888.05px;top:240.15px;font-size:11px;line-height:14px;color:#0c0c66;font-weight:400;letter-spacing:-0.301px;">(ΜΕΛ) ΜΕΛΛΙΣΑΝΙΔΗΣ</span>
<span style="left:1001.45px;top:240.15px;font-size:11px;line-height:14px;color:#0c0c66;font-weight:400;letter-spacing:-0.310px;">(30/2)</span>
<span style="left:1032.45px;top:240.15px;font-size:11px;line-height:14px;color:#0c0c66;font-weight:400;letter-spacing:0.256px;">(-/3 Μέγιστο)</span>
<div style="left:863px;top:244px;width:7px;height:7px;background:#ed1c24;"></div>
<div style="left:251px;top:399px;width:26px;height:287.5px;border:3px solid #e8423f;box-sizing:border-box;"></div>
<div style="left:854px;top:235px;width:251px;height:25px;border:3px solid #e8423f;box-sizing:border-box;"></div>
<div style="left:228.30px;top:399.40px;width:18.4px;height:18.4px;border-radius:50%;background:#e84646;box-shadow:0 0.5px 1.5px rgba(60,80,90,.55);"></div>
<svg style="left:231.50px;top:401.60px" width="12" height="14" viewBox="-6 -7 12 14"><path d="M-2.900 -2.100L0.200 -4.900V4.800" fill="none" stroke="#fff" stroke-width="1.300" stroke-linejoin="miter"/></svg>
<div style="left:832.30px;top:238.50px;width:18.4px;height:18.4px;border-radius:50%;background:#e84646;box-shadow:0 0.5px 1.5px rgba(60,80,90,.55);"></div>
<span style="left:837.60px;top:238.54px;font-size:14px;line-height:18px;color:#fff;font-weight:400;letter-spacing:0.000px;-webkit-text-stroke:0.25px #e84646;">2</span>
<div style="left:0px;top:885px;width:1424px;height:2px;background:#fff;"></div>
<div style="left:0px;top:887px;width:1424px;height:2px;background:#efefef;"></div>
<div style="left:0px;top:889px;width:1424px;height:1px;background:#f8f8f8;"></div>
<div style="left:0px;top:890px;width:1422px;height:1px;background:#8e8e8c;"></div>
<div style="left:0px;top:891px;width:1422px;height:1px;background:#646464;"></div>
<div style="left:0px;top:892px;width:1px;height:109px;background:#a8a8a8;"></div>
<div style="left:1px;top:892px;width:1px;height:109px;background:#6e6e6e;"></div>
<div style="left:2px;top:892px;width:297px;height:109px;background:#787891;"></div>
<div style="left:299px;top:892px;width:1123px;height:109px;background:#d0cfd4;"></div>
<div style="left:1422px;top:885px;width:2px;height:116px;background:#f8f8f8;"></div>
<div style="left:0px;top:1001px;width:1424px;height:2px;background:#fff;"></div>
<div style="left:0px;top:1003px;width:1424px;height:1px;background:#6e7c9c;"></div>
<div style="left:0px;top:1004px;width:1424px;height:21px;background:#f1eded;"></div>
<div style="left:0px;top:1024px;width:1424px;height:1px;background:#f6f3f3;"></div>
<span style="left:8.65px;top:896.58px;font-size:19.4px;line-height:25px;color:#ffff00;font-weight:400;letter-spacing:-0.318px;">Επιτήρηση</span>
<span style="left:7.95px;top:944.69px;font-size:16.2px;line-height:21px;color:#ffff00;font-weight:400;letter-spacing:0.339px;">ΤΣΙ - ΤΣΙΚΗΣ</span>
<span style="left:7.75px;top:968.66px;font-size:16px;line-height:21px;color:#ffff00;font-weight:400;letter-spacing:-0.778px;">A1</span>
<span style="left:305.25px;top:895.85px;font-size:11px;line-height:14px;color:#404040;font-weight:700;letter-spacing:0.060px;">Φίλτρο: (Α1) Α1</span>
<svg style="left:393px;top:894px" width="15" height="16" viewBox="0 0 15 16"><path d="M1 0.800H8L12 4.800V14.500H1Z" fill="#fff" stroke="#222" stroke-width="1.200"/><path d="M8 0.800V4.800H12" fill="none" stroke="#222" stroke-width="1"/><path d="M10.500 11L14 14.500" stroke="#222" stroke-width="1.600"/><circle cx="8.300" cy="9" r="2.800" fill="#bfe6f7" stroke="#4a6a8a" stroke-width="0.900"/></svg>
<svg style="left:304.8px;top:975.7px" width="24.8" height="23.3"><use href="#i-school" width="24.8" height="23.3"/></svg>
<svg style="left:361.8px;top:974.3px" width="24.3" height="25"><use href="#i-people" width="24.3" height="25"/></svg>
<svg style="left:417px;top:974.5px" width="24.5" height="24.5"><use href="#i-cap" width="24.5" height="24.5"/></svg>
<svg style="left:472.5px;top:976px" width="25" height="23.5"><use href="#i-book" width="25" height="23.5"/></svg>
<svg style="left:526.3px;top:974.3px" width="23.5" height="25"><use href="#i-door" width="23.5" height="25"/></svg>
<span style="left:552.75px;top:981.46px;font-size:12px;line-height:16px;color:#0000ff;font-weight:400;letter-spacing:-1.487px;">A1</span>
<span style="left:3.25px;top:1008.25px;font-size:11px;line-height:14px;color:#0c0c66;font-weight:400;letter-spacing:-0.199px;">Ready</span>
<div style="left:1138px;top:1004px;width:1px;height:21px;background:#7c7c9c;"></div>
<div style="left:1139px;top:1004px;width:1px;height:21px;background:#fff;"></div>
<span style="left:1176.45px;top:1008.25px;font-size:11px;line-height:14px;color:#0c0c66;font-weight:400;letter-spacing:0.369px;">NUM</span>
<span style="left:1245.55px;top:1008.25px;font-size:11px;line-height:14px;color:#0c0c66;font-weight:400;letter-spacing:-0.647px;">100%</span>
<svg style="left:1274px;top:1004.4px" width="150" height="20" viewBox="0 0 150 20">
<defs><linearGradient id="gZ" x1="0" y1="0" x2="0" y2="1"><stop offset="0" stop-color="#aab6d6"/><stop offset="0.5" stop-color="#96a3c8"/><stop offset="0.5" stop-color="#8291bc"/><stop offset="1" stop-color="#8795be"/></linearGradient></defs>
<path d="M15 9.500H117" stroke="#9fb0d4" stroke-width="1"/><path d="M15 10.500H117" stroke="#fff" stroke-width="1" opacity="0.7"/><path d="M65.500 6V13" stroke="#9fb0d4" stroke-width="1"/>
<circle cx="9" cy="9.500" r="6.700" fill="url(#gZ)" stroke="#8290b8" stroke-width="0.600"/><path d="M5.300 9.500H12.700" stroke="#fff" stroke-width="2"/>
<circle cx="123" cy="9.500" r="6.700" fill="url(#gZ)" stroke="#8290b8" stroke-width="0.600"/><path d="M119.300 9.500H126.700M123 5.800V13.200" stroke="#fff" stroke-width="2"/>
<path d="M41 3H47.500V12L44.250 15.500L41 12Z" fill="#dfe5f3" stroke="#7a88b4" stroke-width="1" stroke-linejoin="round"/><path d="M44.250 5V11" stroke="#a8b4d4" stroke-width="1"/>
<g fill="#4a5a90"><rect x="146" y="6.500" width="2" height="2"/><rect x="143" y="10.500" width="2" height="2"/><rect x="146" y="10.500" width="2" height="2"/><rect x="140" y="14.500" width="2" height="2"/><rect x="143" y="14.500" width="2" height="2"/><rect x="146" y="14.500" width="2" height="2"/></g>
</svg>
<div style="left:3px;top:1026px;width:149px;height:9px;background:#f4f8fd;"></div>
<span style="left:162.55px;top:1026.45px;font-size:14px;line-height:18px;color:#34349a;font-weight:400;letter-spacing:0.576px;">for lesson after. Red square 2 means that teacher is doing supervision in some other room at this time. Numbers after teacher&#x27;s name show how</span>
</div>
</body></html>
